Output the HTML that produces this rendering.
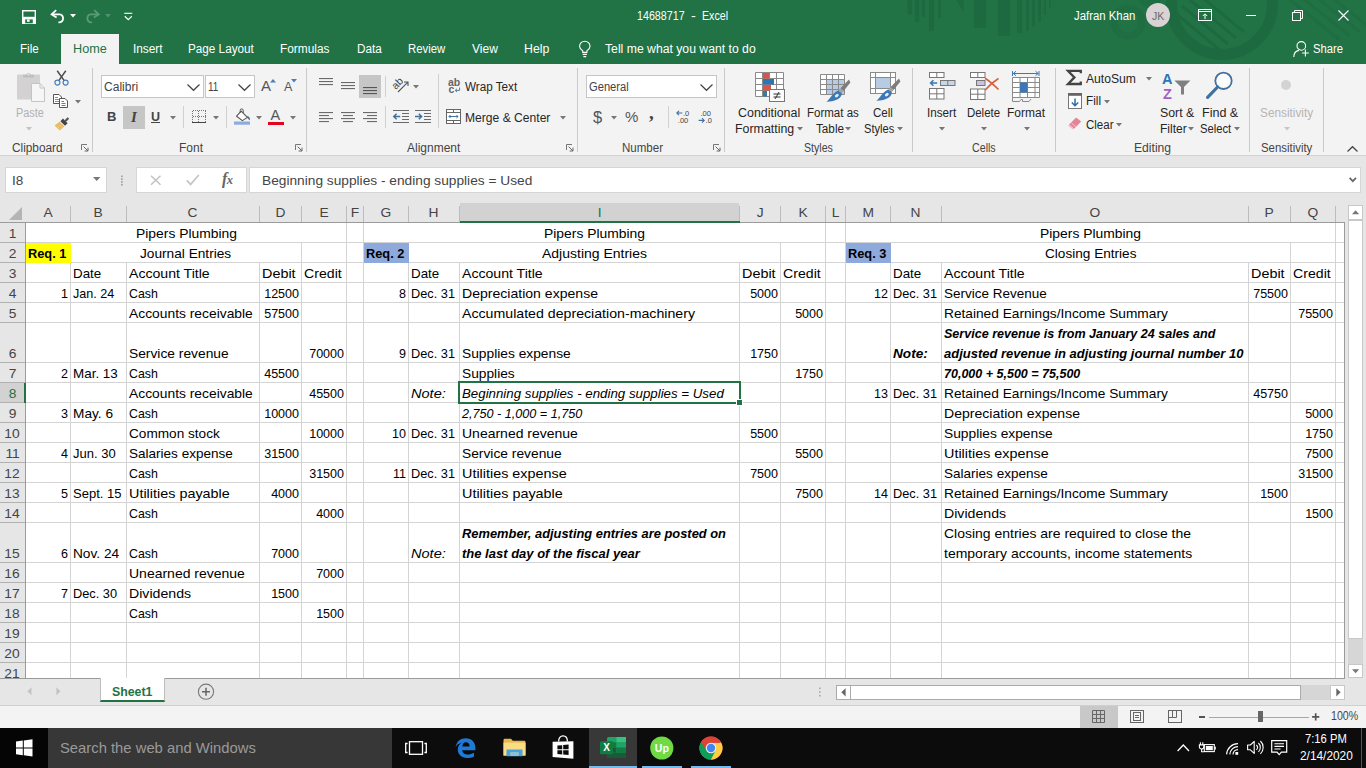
<!DOCTYPE html><html><head><meta charset="utf-8"><title>14688717 - Excel</title><style>
html,body{margin:0;padding:0;}
body{width:1366px;height:768px;overflow:hidden;position:relative;background:#fff;font-family:"Liberation Sans",sans-serif;font-size:12px;color:#262626;}
.a{position:absolute;white-space:nowrap;}
.t{position:absolute;white-space:nowrap;height:20px;line-height:20px;}
.ui{font-size:12px;color:#262626;}
.c,.n,.ci,.cbi,.cb{font-size:12.6px;color:#000;}
.ci{font-style:italic;}
.cbi{font-style:italic;font-weight:bold;}
.cb{font-weight:bold;}
.hd{font-size:12.6px;color:#444;text-align:center;}
.t>span{display:inline-block;}
.c>span,.hd>span{transform:scaleX(1.095);}
.n>span{transform:scaleX(0.995);}
.ci>span{transform:scaleX(1.05);}
.cbi>span{transform:scaleX(1.024);}
.cb>span{transform:scaleX(1.016);}
.vl{position:absolute;width:1px;background:#d4d4d4;}
.hl{position:absolute;height:1px;background:#d4d4d4;}
.sep{position:absolute;width:1px;background:#c6c6c6;}
svg{position:absolute;overflow:visible;}
</style></head><body><div class="a" style="left:0px;top:0px;width:1366px;height:64px;background:#217346;"></div><svg style="left:0;top:0" width="1366" height="64" viewBox="0 0 1366 64"><g fill="#1e6a40"><rect x="907.5" y="0" width="4.5" height="14.6"/><rect x="914.8" y="0" width="4.5" height="22"/><rect x="921.7" y="0" width="3.3" height="17"/><rect x="929" y="0" width="5" height="31"/><rect x="938" y="0" width="3" height="18"/><rect x="974" y="0" width="12" height="28"/><rect x="998" y="0" width="12" height="36"/><rect x="1017" y="0" width="5" height="33"/><rect x="1026" y="0" width="3" height="31"/><rect x="1032" y="0" width="3" height="27"/><rect x="1038" y="0" width="3" height="22"/><rect x="1044" y="0" width="2" height="15"/><rect x="1049" y="0" width="2" height="8"/><path d="M956 0H964V12Z"/></g>
<circle cx="1222" cy="4" r="50.500" fill="none" stroke="#1e6a40" stroke-width="11"/>
<g stroke="#1e6a40" stroke-width="3" fill="none"><path d="M1182 6L1228 44M1190 0L1236 38M1198 -6L1244 32M1174 12L1220 50"/></g>
<circle cx="1128" cy="22" r="14" fill="none" stroke="#1f6d42" stroke-width="7"/>
<circle cx="1150" cy="-4" r="12" fill="#1f6d42"/>
<g stroke="#1f6d42" stroke-width="3" fill="none"><path d="M1290 0L1340 40M1300 -4L1350 36M1310 -8L1360 32M1320 -12L1370 28"/></g>
</svg><svg style="left:22px;top:10px" width="14" height="14" viewBox="0 0 14 14"><path d="M0.7 0.7H13.3V13.3H0.7Z" fill="none" stroke="#fff" stroke-width="1.4"/><rect x="3" y="0.7" width="8" height="5.3" fill="none" stroke="#fff" stroke-width="0"/><path d="M0.7 6.8H13.3V13.3H0.7Z" fill="#fff"/><rect x="3.2" y="9.4" width="7.6" height="3.9" fill="#217346"/><rect x="5" y="9.4" width="2.6" height="2.4" fill="#fff"/></svg>
<svg style="left:50px;top:9px" width="16" height="15" viewBox="0 0 16 15"><path d="M6.2 1.2L1.6 5.4L6.6 8.6" fill="none" stroke="#fff" stroke-width="1.8" stroke-linejoin="miter"/><path d="M2.4 5.3H9.6A4.1 4.1 0 0 1 9.6 13.4H8.4" fill="none" stroke="#fff" stroke-width="1.8"/></svg>
<svg style="left:70px;top:14px" width="6" height="4" viewBox="0 0 6 4"><path d="M0 0H6L3 3.6Z" fill="#fff"/></svg>
<svg style="left:86px;top:9px" width="16" height="15" viewBox="0 0 16 15"><g transform="translate(14.4,0) scale(-1,1)"><path d="M6.2 1.2L1.6 5.4L6.6 8.6" fill="none" stroke="#5b9a78" stroke-width="1.8"/><path d="M2.4 5.3H9.6A4.1 4.1 0 0 1 9.6 13.4H8.4" fill="none" stroke="#5b9a78" stroke-width="1.8"/></g></svg>
<svg style="left:105px;top:14px" width="6" height="4" viewBox="0 0 6 4"><path d="M0 0H6L3 3.6Z" fill="#4f9170"/></svg>
<svg style="left:124px;top:12px" width="9" height="9" viewBox="0 0 9 9"><path d="M0.3 1.3H8.3" stroke="#fff" stroke-width="1.1"/><path d="M0.8 4.2L4.3 7.6L7.8 4.2" fill="none" stroke="#fff" stroke-width="1.2"/></svg>
<svg style="left:1198px;top:9px" width="14" height="12" viewBox="0 0 14 12"><rect x="0.5" y="0.5" width="13" height="11" fill="none" stroke="#fff"/><path d="M0.5 2.5H13.5" stroke="#fff"/><path d="M7 10V5M4.8 7L7 4.8L9.2 7" fill="none" stroke="#fff"/></svg>
<svg style="left:1246px;top:15px" width="10" height="1" viewBox="0 0 10 1"><rect width="10" height="1" fill="#fff"/></svg>
<svg style="left:1292px;top:10px" width="11" height="11" viewBox="0 0 11 11"><rect x="0.5" y="2.5" width="8" height="8" fill="none" stroke="#fff"/><path d="M2.5 2.5V0.5H10.5V8.5H8.5" fill="none" stroke="#fff"/></svg>
<svg style="left:1338px;top:10px" width="11" height="11" viewBox="0 0 11 11"><path d="M0.5 0.5L10.5 10.5M10.5 0.5L0.5 10.5" stroke="#fff" stroke-width="1.1"/></svg>
<svg style="left:637.4px;top:6px" width="47.6" height="20"><text x="0" y="14.2" textLength="47.6" lengthAdjust="spacingAndGlyphs" font-family="Liberation Sans, sans-serif" font-size="12" font-weight="normal" fill="#fff" >14688717</text></svg><svg style="left:691.1px;top:6px" width="4.8" height="20"><text x="0" y="14.2" textLength="4.8" lengthAdjust="spacingAndGlyphs" font-family="Liberation Sans, sans-serif" font-size="12" font-weight="normal" fill="#fff" >-</text></svg><svg style="left:702.1px;top:6px" width="26.0" height="20"><text x="0" y="14.2" textLength="26.0" lengthAdjust="spacingAndGlyphs" font-family="Liberation Sans, sans-serif" font-size="12" font-weight="normal" fill="#fff" >Excel</text></svg><svg style="left:1073.6px;top:6px" width="61.3" height="20"><text x="0" y="14.2" textLength="61.3" lengthAdjust="spacingAndGlyphs" font-family="Liberation Sans, sans-serif" font-size="12" font-weight="normal" fill="#fff" >Jafran Khan</text></svg><div class="a" style="left:1146px;top:3px;width:24px;height:24px;border-radius:12px;background:#d9d3d5;"></div><svg style="left:1152.1px;top:6px" width="12.3" height="20"><text x="0" y="14.2" textLength="12.3" lengthAdjust="spacingAndGlyphs" font-family="Liberation Sans, sans-serif" font-size="11" font-weight="normal" fill="#6a6a6a" >JK</text></svg><div class="a" style="left:61px;top:34px;width:58px;height:30px;background:#f3f3f3;"></div><svg style="left:19.6px;top:39px" width="18.8" height="20"><text x="0" y="14.2" textLength="18.8" lengthAdjust="spacingAndGlyphs" font-family="Liberation Sans, sans-serif" font-size="12" font-weight="normal" fill="#fff" >File</text></svg><svg style="left:72.8px;top:39px" width="33.8" height="20"><text x="0" y="14.2" textLength="33.8" lengthAdjust="spacingAndGlyphs" font-family="Liberation Sans, sans-serif" font-size="12" font-weight="normal" fill="#217346" >Home</text></svg><svg style="left:132.6px;top:39px" width="29.6" height="20"><text x="0" y="14.2" textLength="29.6" lengthAdjust="spacingAndGlyphs" font-family="Liberation Sans, sans-serif" font-size="12" font-weight="normal" fill="#fff" >Insert</text></svg><svg style="left:188.3px;top:39px" width="65.8" height="20"><text x="0" y="14.2" textLength="65.8" lengthAdjust="spacingAndGlyphs" font-family="Liberation Sans, sans-serif" font-size="12" font-weight="normal" fill="#fff" >Page Layout</text></svg><svg style="left:280.4px;top:39px" width="49.5" height="20"><text x="0" y="14.2" textLength="49.5" lengthAdjust="spacingAndGlyphs" font-family="Liberation Sans, sans-serif" font-size="12" font-weight="normal" fill="#fff" >Formulas</text></svg><svg style="left:356.6px;top:39px" width="24.8" height="20"><text x="0" y="14.2" textLength="24.8" lengthAdjust="spacingAndGlyphs" font-family="Liberation Sans, sans-serif" font-size="12" font-weight="normal" fill="#fff" >Data</text></svg><svg style="left:408.1px;top:39px" width="37.3" height="20"><text x="0" y="14.2" textLength="37.3" lengthAdjust="spacingAndGlyphs" font-family="Liberation Sans, sans-serif" font-size="12" font-weight="normal" fill="#fff" >Review</text></svg><svg style="left:471.6px;top:39px" width="25.8" height="20"><text x="0" y="14.2" textLength="25.8" lengthAdjust="spacingAndGlyphs" font-family="Liberation Sans, sans-serif" font-size="12" font-weight="normal" fill="#fff" >View</text></svg><svg style="left:523.6px;top:39px" width="25.3" height="20"><text x="0" y="14.2" textLength="25.3" lengthAdjust="spacingAndGlyphs" font-family="Liberation Sans, sans-serif" font-size="12" font-weight="normal" fill="#fff" >Help</text></svg><svg style="left:604.6px;top:39px" width="150.7" height="20"><text x="0" y="14.2" textLength="150.7" lengthAdjust="spacingAndGlyphs" font-family="Liberation Sans, sans-serif" font-size="12" font-weight="normal" fill="#fff" >Tell me what you want to do</text></svg><svg style="left:1312.7px;top:39px" width="30.0" height="20"><text x="0" y="14.2" textLength="30.0" lengthAdjust="spacingAndGlyphs" font-family="Liberation Sans, sans-serif" font-size="12" font-weight="normal" fill="#fff" >Share</text></svg><svg style="left:579px;top:41px" width="12" height="17" viewBox="0 0 12 17"><path d="M3.7 11.4V9.8C2.2 8.6 0.6 7.4 0.6 5.4A5.2 5.2 0 0 1 11 5.4C11 7.4 9.4 8.6 7.9 9.8V11.4Z" fill="none" stroke="#fff" stroke-width="1.1"/><path d="M3.7 13.4H7.9M4.4 15.6H7.2" stroke="#fff" stroke-width="1.1"/></svg>
<svg style="left:1293px;top:41px" width="17" height="17" viewBox="0 0 17 17"><circle cx="8.3" cy="4.9" r="4.3" fill="none" stroke="#fff" stroke-width="1.1"/><path d="M0.8 16C0.8 12.4 3 9.9 6 9.4" fill="none" stroke="#fff" stroke-width="1.1"/><path d="M12.4 8.6V15.4M9 12H15.8" stroke="#fff" stroke-width="1.1"/></svg>
<div class="a" style="left:0px;top:64px;width:1366px;height:91px;background:#f3f3f3;"></div><div class="a" style="left:0px;top:155px;width:1366px;height:1px;background:#d2d2d2;"></div><div class="sep" style="left:92px;top:68px;height:84px;background:#c9c9c9;"></div>
<div class="sep" style="left:306px;top:68px;height:84px;background:#c9c9c9;"></div>
<div class="sep" style="left:577px;top:68px;height:84px;background:#c9c9c9;"></div>
<div class="sep" style="left:724px;top:68px;height:84px;background:#c9c9c9;"></div>
<div class="sep" style="left:912px;top:68px;height:84px;background:#c9c9c9;"></div>
<div class="sep" style="left:1055px;top:68px;height:84px;background:#c9c9c9;"></div>
<div class="sep" style="left:1249px;top:68px;height:84px;background:#c9c9c9;"></div>
<div class="sep" style="left:1323px;top:68px;height:84px;background:#c9c9c9;"></div>
<svg style="left:12.2px;top:138px" width="50.6" height="20"><text x="0" y="14.2" textLength="50.6" lengthAdjust="spacingAndGlyphs" font-family="Liberation Sans, sans-serif" font-size="12" font-weight="normal" fill="#444" >Clipboard</text></svg>
<svg style="left:179.1px;top:138px" width="24.0" height="20"><text x="0" y="14.2" textLength="24.0" lengthAdjust="spacingAndGlyphs" font-family="Liberation Sans, sans-serif" font-size="12" font-weight="normal" fill="#444" >Font</text></svg>
<svg style="left:406.6px;top:138px" width="53.3" height="20"><text x="0" y="14.2" textLength="53.3" lengthAdjust="spacingAndGlyphs" font-family="Liberation Sans, sans-serif" font-size="12" font-weight="normal" fill="#444" >Alignment</text></svg>
<svg style="left:622.3px;top:138px" width="41.0" height="20"><text x="0" y="14.2" textLength="41.0" lengthAdjust="spacingAndGlyphs" font-family="Liberation Sans, sans-serif" font-size="12" font-weight="normal" fill="#444" >Number</text></svg>
<svg style="left:803.9px;top:138px" width="28.9" height="20"><text x="0" y="14.2" textLength="28.9" lengthAdjust="spacingAndGlyphs" font-family="Liberation Sans, sans-serif" font-size="12" font-weight="normal" fill="#444" >Styles</text></svg>
<svg style="left:972.3px;top:138px" width="23.7" height="20"><text x="0" y="14.2" textLength="23.7" lengthAdjust="spacingAndGlyphs" font-family="Liberation Sans, sans-serif" font-size="12" font-weight="normal" fill="#444" >Cells</text></svg>
<svg style="left:1134.1px;top:138px" width="37.1" height="20"><text x="0" y="14.2" textLength="37.1" lengthAdjust="spacingAndGlyphs" font-family="Liberation Sans, sans-serif" font-size="12" font-weight="normal" fill="#444" >Editing</text></svg>
<svg style="left:1261.1px;top:138px" width="51.3" height="20"><text x="0" y="14.2" textLength="51.3" lengthAdjust="spacingAndGlyphs" font-family="Liberation Sans, sans-serif" font-size="12" font-weight="normal" fill="#444" >Sensitivity</text></svg>
<svg style="left:81px;top:144px" width="8" height="8" viewBox="0 0 8 8"><path d="M0.5 6V0.5H6" fill="none" stroke="#777" stroke-width="1"/><path d="M2.6 2.6L7 7M7 3.6V7H3.6" fill="none" stroke="#666" stroke-width="1"/></svg>
<svg style="left:295px;top:144px" width="8" height="8" viewBox="0 0 8 8"><path d="M0.5 6V0.5H6" fill="none" stroke="#777" stroke-width="1"/><path d="M2.6 2.6L7 7M7 3.6V7H3.6" fill="none" stroke="#666" stroke-width="1"/></svg>
<svg style="left:566px;top:144px" width="8" height="8" viewBox="0 0 8 8"><path d="M0.5 6V0.5H6" fill="none" stroke="#777" stroke-width="1"/><path d="M2.6 2.6L7 7M7 3.6V7H3.6" fill="none" stroke="#666" stroke-width="1"/></svg>
<svg style="left:713px;top:144px" width="8" height="8" viewBox="0 0 8 8"><path d="M0.5 6V0.5H6" fill="none" stroke="#777" stroke-width="1"/><path d="M2.6 2.6L7 7M7 3.6V7H3.6" fill="none" stroke="#666" stroke-width="1"/></svg>
<svg style="left:1347px;top:146px" width="11" height="6" viewBox="0 0 11 6"><path d="M0.5 5.5L5.5 0.7L10.5 5.5" fill="none" stroke="#444" stroke-width="1.2"/></svg>
<svg style="left:17px;top:72px" width="28" height="30" viewBox="0 0 28 30"><rect x="0" y="2.5" width="23" height="25" rx="1" fill="#d3d1d2"/><path d="M6 5.5V2.8H9.2A2.4 2.4 0 0 1 13.8 2.8H17V5.5Z" fill="#bfbdbe"/><circle cx="11.5" cy="2.6" r="1" fill="#e9e9e9"/>
<path d="M14.5 11.5H23L27.5 16V29.5H14.5Z" fill="#f6f6f6" stroke="#c4c4c4" stroke-width="1"/><path d="M23 11.5V16H27.5" fill="none" stroke="#c4c4c4"/></svg>
<svg style="left:15.6px;top:103px" width="27.8" height="20"><text x="0" y="14.2" textLength="27.8" lengthAdjust="spacingAndGlyphs" font-family="Liberation Sans, sans-serif" font-size="12" font-weight="normal" fill="#b1b1b1" >Paste</text></svg>
<svg style="left:25.5px;top:126.5px" width="6" height="4" viewBox="0 0 6 4"><path d="M0 0H6L3 3.4Z" fill="#c3c3c3"/></svg>
<svg style="left:54px;top:70px" width="15" height="16" viewBox="0 0 15 16"><path d="M3.2 0.8L10.2 10.6M11.8 0.8L4.8 10.6" stroke="#4d4d4d" stroke-width="1.5" fill="none"/><circle cx="3.4" cy="12.6" r="2.5" fill="none" stroke="#4a7ebb" stroke-width="1.2"/><circle cx="11.6" cy="12.6" r="2.5" fill="none" stroke="#4a7ebb" stroke-width="1.2"/></svg>
<svg style="left:53px;top:94px" width="16" height="15" viewBox="0 0 16 15"><path d="M0.5 0.5H6L8.5 3V9.5H0.5Z" fill="#fff" stroke="#555" stroke-width="1"/><path d="M2 3.5H5M2 5.5H6M2 7.5H6" stroke="#8a8a8a" stroke-width="1"/>
<path d="M6.5 4.5H12L14.5 7V13.5H6.5Z" fill="#fff" stroke="#555" stroke-width="1"/><path d="M8.500 7.500H11M8.500 9.500H12.500M8.500 11.500H12.500" stroke="#4a7ebb" stroke-width="1"/></svg>
<svg style="left:74.5px;top:99.5px" width="6" height="4" viewBox="0 0 6 4"><path d="M0 0H6L3 3.4Z" fill="#777"/></svg>
<svg style="left:54px;top:116px" width="16" height="16" viewBox="0 0 16 16"><path d="M10.6 4.2L13.6 1.2L15.2 2.8L12.2 5.8Z" fill="#555"/><path d="M6.4 5.2L9 2.6L13.6 7.2L11 9.8Z" fill="#444"/><path d="M0.6 9.4L5.6 5.8L10.4 10.6L5.6 14.6Z" fill="#e8b85c"/><path d="M3 9.8L6.5 13.3M5 8.2L8.4 11.6" stroke="#f4d89a" stroke-width="0.8"/></svg>
<div class="a" style="left:101px;top:75px;width:103px;height:23px;box-sizing:border-box;border:1px solid #c6c6c6;background:#fff;"></div>
<div class="a" style="left:205px;top:75px;width:50px;height:23px;box-sizing:border-box;border:1px solid #c6c6c6;background:#fff;"></div>
<svg style="left:104.1px;top:77px" width="34.1" height="20"><text x="0" y="14.2" textLength="34.1" lengthAdjust="spacingAndGlyphs" font-family="Liberation Sans, sans-serif" font-size="12" font-weight="normal" fill="#444" >Calibri</text></svg>
<svg style="left:207.9px;top:77px" width="10.3" height="20"><text x="0" y="14.2" textLength="10.3" lengthAdjust="spacingAndGlyphs" font-family="Liberation Sans, sans-serif" font-size="12" font-weight="normal" fill="#444" >11</text></svg>
<svg style="left:187px;top:83.5px" width="13" height="7" viewBox="0 0 13 7"><path d="M0.5 0.5L6.5 6.3L12.5 0.5" fill="none" stroke="#444" stroke-width="1.2"/></svg>
<svg style="left:237.5px;top:83.5px" width="13" height="7" viewBox="0 0 13 7"><path d="M0.5 0.5L6.5 6.3L12.5 0.5" fill="none" stroke="#444" stroke-width="1.2"/></svg>
<div class="t ui" style="left:261px;top:76px;color:#555;font-size:15px;">A</div>
<svg style="left:270px;top:79px" width="6" height="4" viewBox="0 0 6 4"><path d="M0 3.6H6L3 0Z" fill="#4a7ebb"/></svg>
<div class="t ui" style="left:284px;top:77px;color:#555;font-size:12.5px;">A</div>
<svg style="left:291px;top:79px" width="6" height="4" viewBox="0 0 6 4"><path d="M0 0H6L3 3.6Z" fill="#4a7ebb"/></svg>
<div class="t ui" style="left:107px;top:107px;color:#444;font-size:13px;font-weight:bold;">B</div>
<div class="a" style="left:123px;top:106px;width:22px;height:23px;background:#c6c6c6;"></div>
<div class="t" style="left:123px;width:22px;text-align:center;top:107px;font-family:'Liberation Serif',serif;font-style:italic;font-weight:bold;font-size:15px;color:#444;">I</div>
<div class="t ui" style="left:151px;top:106.5px;color:#444;font-size:12.5px;font-weight:bold;">U</div>
<div class="a" style="left:151px;top:122px;width:9px;height:1px;background:#444;"></div>
<svg style="left:169.5px;top:115.5px" width="6" height="4" viewBox="0 0 6 4"><path d="M0 0H6L3 3.4Z" fill="#777"/></svg>
<div class="sep" style="left:183px;top:106px;height:22px;background:#d0d0d0;"></div>
<svg style="left:192px;top:110px" width="14" height="14" viewBox="0 0 14 14"><path d="M0.5 0.5H13.5M0.5 6.5H13.5M0.5 0.5V12M6.5 0.5V12M13.5 0.5V12" stroke="#777" stroke-width="1" stroke-dasharray="1 1" fill="none" shape-rendering="crispEdges"/><path d="M0 12.5H14" stroke="#444" stroke-width="1"/></svg>
<svg style="left:212.5px;top:115.5px" width="6" height="4" viewBox="0 0 6 4"><path d="M0 0H6L3 3.4Z" fill="#777"/></svg>
<div class="sep" style="left:226px;top:106px;height:22px;background:#d0d0d0;"></div>
<svg style="left:234px;top:108px" width="18" height="17" viewBox="0 0 18 17"><path d="M7.2 3.2L13.4 9.4L8.4 12.6L2.6 8.2Z" fill="#fdfdfd" stroke="#555" stroke-width="1.1" stroke-linejoin="round"/><path d="M6.2 4.8V2.4A1.5 1.5 0 0 1 9.2 2.4V5" fill="none" stroke="#555" stroke-width="1"/><path d="M13.4 8C15.2 8.6 16.2 10 16 12.2C14.6 11.4 13.6 10.4 13 9.2Z" fill="#41719c"/><rect x="0" y="13.5" width="16" height="3.2" fill="#8faadc"/></svg>
<svg style="left:255.5px;top:115.5px" width="6" height="4" viewBox="0 0 6 4"><path d="M0 0H6L3 3.4Z" fill="#777"/></svg>
<div class="t ui" style="left:270.5px;top:105px;color:#555;font-size:14.5px;">A</div>
<div class="a" style="left:268px;top:121.5px;width:16px;height:3.2px;background:#e3061b;"></div>
<svg style="left:289.5px;top:115.5px" width="6" height="4" viewBox="0 0 6 4"><path d="M0 0H6L3 3.4Z" fill="#777"/></svg>
<svg style="left:319px;top:0px" width="16" height="1"><rect x="0" y="78.0" width="14" height="1.1" fill="#6a6a6a"/><rect x="0" y="81.0" width="14" height="1.1" fill="#6a6a6a"/><rect x="0" y="84.0" width="14" height="1.1" fill="#6a6a6a"/></svg>
<svg style="left:341px;top:0px" width="16" height="1"><rect x="0" y="82.0" width="14" height="1.1" fill="#6a6a6a"/><rect x="0" y="85.0" width="14" height="1.1" fill="#6a6a6a"/><rect x="0" y="88.0" width="14" height="1.1" fill="#6a6a6a"/></svg>
<div class="a" style="left:359px;top:75px;width:22px;height:23px;background:#c6c6c6;"></div>
<svg style="left:363px;top:0px" width="16" height="1"><rect x="0" y="87.0" width="14" height="1.1" fill="#555"/><rect x="0" y="90.0" width="14" height="1.1" fill="#555"/><rect x="0" y="93.0" width="14" height="1.1" fill="#555"/></svg>
<div class="sep" style="left:385px;top:76px;height:21px;background:#d0d0d0;"></div>
<svg style="left:392px;top:77px" width="18" height="17" viewBox="0 0 18 17"><g transform="rotate(-45 8 8)"><text x="1.5" y="8.4" font-family="Liberation Sans, sans-serif" font-size="10.5" fill="#444">ab</text></g><path d="M6 15L15.6 5.4M12 5H16V9" fill="none" stroke="#555" stroke-width="1.1"/></svg>
<svg style="left:412.5px;top:85.0px" width="6" height="4" viewBox="0 0 6 4"><path d="M0 0H6L3 3.4Z" fill="#777"/></svg>
<svg style="left:319px;top:0px" width="16" height="1"><rect x="0" y="112.0" width="14" height="1.1" fill="#6a6a6a"/><rect x="0" y="115.0" width="10" height="1.1" fill="#6a6a6a"/><rect x="0" y="118.0" width="14" height="1.1" fill="#6a6a6a"/><rect x="0" y="121.0" width="10" height="1.1" fill="#6a6a6a"/></svg>
<svg style="left:341px;top:0px" width="16" height="1"><rect x="0" y="112.0" width="14" height="1.1" fill="#6a6a6a"/><rect x="2" y="115.0" width="10" height="1.1" fill="#6a6a6a"/><rect x="0" y="118.0" width="14" height="1.1" fill="#6a6a6a"/><rect x="2" y="121.0" width="10" height="1.1" fill="#6a6a6a"/></svg>
<svg style="left:363px;top:0px" width="16" height="1"><rect x="0" y="112.0" width="14" height="1.1" fill="#6a6a6a"/><rect x="4" y="115.0" width="10" height="1.1" fill="#6a6a6a"/><rect x="0" y="118.0" width="14" height="1.1" fill="#6a6a6a"/><rect x="4" y="121.0" width="10" height="1.1" fill="#6a6a6a"/></svg>
<div class="sep" style="left:385px;top:106px;height:22px;background:#d0d0d0;"></div>
<svg style="left:393px;top:110px" width="16" height="13" viewBox="0 0 16 13"><path d="M0 0.5H16M9 3.5H16M9 6.5H16M9 9.5H16M0 12.5H16" stroke="#6a6a6a" stroke-width="1.1"/><path d="M7.2 6.5H1M3.6 3.8L0.8 6.5L3.6 9.2" fill="none" stroke="#41719c" stroke-width="1.5"/></svg>
<svg style="left:415px;top:110px" width="16" height="13" viewBox="0 0 16 13"><path d="M0 0.5H16M9 3.5H16M9 6.5H16M9 9.5H16M0 12.5H16" stroke="#6a6a6a" stroke-width="1.1"/><path d="M0 6.5H6.4M3.8 3.8L6.6 6.5L3.8 9.2" fill="none" stroke="#41719c" stroke-width="1.5"/></svg>
<div class="sep" style="left:438px;top:74px;height:54px;background:#d0d0d0;"></div>
<svg style="left:448px;top:79px" width="13" height="15" viewBox="0 0 13 15"><text x="0" y="6.6" font-family="Liberation Sans, sans-serif" font-size="10.5" font-weight="bold" fill="#666">ab</text><text x="0.6" y="13.6" font-family="Liberation Sans, sans-serif" font-size="10.5" font-weight="bold" fill="#666">c</text><path d="M11.6 8.5V11.4H7.4M9 9.8L7.2 11.4L9 13" fill="none" stroke="#41719c" stroke-width="0.9"/></svg>
<svg style="left:465.0px;top:77px" width="52.2" height="20"><text x="0" y="14.2" textLength="52.2" lengthAdjust="spacingAndGlyphs" font-family="Liberation Sans, sans-serif" font-size="12" font-weight="normal" fill="#262626" >Wrap Text</text></svg>
<svg style="left:446px;top:109px" width="15" height="15" viewBox="0 0 15 15"><rect x="0.5" y="0.5" width="14" height="14" fill="#fff" stroke="#666"/><path d="M0.5 3.5H14.5M0.5 11.5H14.5M7.5 0.5V3.5M7.5 11.5V14.5" stroke="#666" stroke-width="1"/><path d="M3 7.5H12M4.6 5.9L3 7.5L4.6 9.1M10.4 5.9L12 7.5L10.4 9.1" fill="none" stroke="#41719c" stroke-width="1"/></svg>
<svg style="left:465.0px;top:108px" width="85.4" height="20"><text x="0" y="14.2" textLength="85.4" lengthAdjust="spacingAndGlyphs" font-family="Liberation Sans, sans-serif" font-size="12" font-weight="normal" fill="#262626" >Merge &amp; Center</text></svg>
<svg style="left:559.5px;top:115.5px" width="6" height="4" viewBox="0 0 6 4"><path d="M0 0H6L3 3.4Z" fill="#777"/></svg>
<div class="a" style="left:586px;top:75px;width:131px;height:23px;box-sizing:border-box;border:1px solid #c6c6c6;background:#fff;"></div>
<svg style="left:589.3px;top:77px" width="39.7" height="20"><text x="0" y="14.2" textLength="39.7" lengthAdjust="spacingAndGlyphs" font-family="Liberation Sans, sans-serif" font-size="12" font-weight="normal" fill="#444" >General</text></svg>
<svg style="left:700px;top:83.5px" width="13" height="7" viewBox="0 0 13 7"><path d="M0.5 0.5L6.5 6.3L12.5 0.5" fill="none" stroke="#444" stroke-width="1.2"/></svg>
<div class="t ui" style="left:593px;top:107px;color:#555;font-size:16.5px;">$</div>
<svg style="left:610.5px;top:115.5px" width="6" height="4" viewBox="0 0 6 4"><path d="M0 0H6L3 3.4Z" fill="#777"/></svg>
<div class="t ui" style="left:625px;top:107px;color:#555;font-size:15px;">%</div>
<div class="t ui" style="left:649px;top:103px;color:#444;font-size:19px;font-weight:bold;font-family:'Liberation Serif',serif;">,</div>
<div class="sep" style="left:668px;top:106px;height:22px;background:#d0d0d0;"></div>
<svg style="left:676px;top:110px" width="15" height="14" viewBox="0 0 15 14"><path d="M6.4 3H0.8M3 0.8L0.8 3L3 5.2" fill="none" stroke="#41719c" stroke-width="1.1"/><text x="7" y="6" font-family="Liberation Sans, sans-serif" font-size="7.5" fill="#444">.0</text><text x="1.8" y="13.2" font-family="Liberation Sans, sans-serif" font-size="7.5" fill="#444">.00</text></svg>
<svg style="left:698px;top:110px" width="15" height="14" viewBox="0 0 15 14"><text x="2.4" y="6" font-family="Liberation Sans, sans-serif" font-size="7.5" fill="#444">.00</text><path d="M0.6 10.4H6.2M4 8.2L6.2 10.4L4 12.6" fill="none" stroke="#41719c" stroke-width="1.1"/><text x="7.6" y="13.2" font-family="Liberation Sans, sans-serif" font-size="7.5" fill="#444">.0</text></svg>
<svg style="left:755px;top:72px" width="31" height="31" viewBox="0 0 31 31"><rect x="0.5" y="0.5" width="28" height="24" fill="#fff"/><path d="M0.5 0.5H28.5" stroke="#8a8a8a" stroke-width="1"/><path d="M0.5 6.5H28.5" stroke="#8a8a8a" stroke-width="1"/><path d="M0.5 12.5H28.5" stroke="#8a8a8a" stroke-width="1"/><path d="M0.5 18.5H28.5" stroke="#8a8a8a" stroke-width="1"/><path d="M0.5 24.5H28.5" stroke="#8a8a8a" stroke-width="1"/><path d="M0.5 0.5V24.5" stroke="#8a8a8a" stroke-width="1"/><path d="M7.5 0.5V24.5" stroke="#8a8a8a" stroke-width="1"/><path d="M14.5 0.5V24.5" stroke="#8a8a8a" stroke-width="1"/><path d="M21.5 0.5V24.5" stroke="#8a8a8a" stroke-width="1"/><path d="M28.5 0.5V24.5" stroke="#8a8a8a" stroke-width="1"/><rect x="8" y="1" width="6" height="5.5" fill="#d9534a"/><rect x="8" y="7" width="11" height="5.5" fill="#2e75b6"/><rect x="8" y="13" width="8" height="5.5" fill="#d9534a"/><rect x="8" y="19" width="4" height="5.5" fill="#3c7a9c"/>
<rect x="14.5" y="17.5" width="15" height="12" fill="#fbfbfb" stroke="#777"/><path d="M18.5 22H25.5M18.5 25H25.5M24 20L20 27" stroke="#333" stroke-width="1"/></svg>
<svg style="left:738.2px;top:103px" width="62.2" height="20"><text x="0" y="14.2" textLength="62.2" lengthAdjust="spacingAndGlyphs" font-family="Liberation Sans, sans-serif" font-size="12" font-weight="normal" fill="#262626" >Conditional</text></svg>
<svg style="left:735.0px;top:119px" width="59.2" height="20"><text x="0" y="14.2" textLength="59.2" lengthAdjust="spacingAndGlyphs" font-family="Liberation Sans, sans-serif" font-size="12" font-weight="normal" fill="#262626" >Formatting</text></svg>
<svg style="left:796.7px;top:127.0px" width="6" height="4" viewBox="0 0 6 4"><path d="M0 0H6L3 3.4Z" fill="#777"/></svg>
<svg style="left:820px;top:74px" width="32" height="30" viewBox="0 0 32 30"><rect x="0.5" y="0.5" width="24" height="20" fill="#fff"/><rect x="6.5" y="5.5" width="18" height="15" fill="#b7cbe3"/><path d="M0.5 0.5H24.5" stroke="#8a8a8a"/><path d="M0.5 5.5H24.5" stroke="#8a8a8a"/><path d="M0.5 10.5H24.5" stroke="#8a8a8a"/><path d="M0.5 15.5H24.5" stroke="#8a8a8a"/><path d="M0.5 20.5H24.5" stroke="#8a8a8a"/><path d="M0.5 0.5V20.5" stroke="#8a8a8a"/><path d="M6.5 0.5V20.5" stroke="#8a8a8a"/><path d="M12.5 0.5V20.5" stroke="#8a8a8a"/><path d="M18.5 0.5V20.5" stroke="#8a8a8a"/><path d="M24.5 0.5V20.5" stroke="#8a8a8a"/><g transform="translate(0,0)"><path d="M29 5.400L30.400 8.600L23.600 17L20.400 14.200Z" fill="#7d7d7d"/><path d="M20.400 14.200L23.600 17L21.800 19.200L18.200 16.400Z" fill="#a5a5a5"/><path d="M18.200 16.400L21.800 19.200C22 23.500 17 27.400 6.200 27.700C10.500 25 11.500 19.500 18.200 16.400Z" fill="#3b78b4"/><ellipse cx="16.800" cy="21.600" rx="2.200" ry="1.400" fill="#e3edf7" transform="rotate(-40 16.800 21.600)"/></g></svg>
<svg style="left:807.4px;top:103px" width="51.8" height="20"><text x="0" y="14.2" textLength="51.8" lengthAdjust="spacingAndGlyphs" font-family="Liberation Sans, sans-serif" font-size="12" font-weight="normal" fill="#262626" >Format as</text></svg>
<svg style="left:815.6px;top:119px" width="28.0" height="20"><text x="0" y="14.2" textLength="28.0" lengthAdjust="spacingAndGlyphs" font-family="Liberation Sans, sans-serif" font-size="12" font-weight="normal" fill="#262626" >Table</text></svg>
<svg style="left:845.4px;top:127.0px" width="6" height="4" viewBox="0 0 6 4"><path d="M0 0H6L3 3.4Z" fill="#777"/></svg>
<svg style="left:870px;top:72px" width="32" height="30" viewBox="0 0 32 30"><rect x="0.5" y="0.5" width="25" height="21" fill="#fff" stroke="#8a8a8a"/><path d="M0.5 5.5H25.5M0.5 16.500H25.5M5.5 0.5V21.5M20.5 0.5V21.5" stroke="#8a8a8a"/><rect x="6" y="6" width="14" height="10" fill="#b7cbe3"/><g transform="translate(0,1)"><path d="M29 5.400L30.400 8.600L23.600 17L20.400 14.200Z" fill="#7d7d7d"/><path d="M20.400 14.200L23.600 17L21.800 19.200L18.200 16.400Z" fill="#a5a5a5"/><path d="M18.200 16.400L21.800 19.200C22 23.500 17 27.400 6.200 27.700C10.500 25 11.500 19.500 18.200 16.400Z" fill="#3b78b4"/><ellipse cx="16.800" cy="21.600" rx="2.200" ry="1.400" fill="#e3edf7" transform="rotate(-40 16.800 21.600)"/></g></svg>
<svg style="left:873.1px;top:103px" width="19.9" height="20"><text x="0" y="14.2" textLength="19.9" lengthAdjust="spacingAndGlyphs" font-family="Liberation Sans, sans-serif" font-size="12" font-weight="normal" fill="#262626" >Cell</text></svg>
<svg style="left:864.1px;top:119px" width="30.3" height="20"><text x="0" y="14.2" textLength="30.3" lengthAdjust="spacingAndGlyphs" font-family="Liberation Sans, sans-serif" font-size="12" font-weight="normal" fill="#262626" >Styles</text></svg>
<svg style="left:896.5px;top:127.0px" width="6" height="4" viewBox="0 0 6 4"><path d="M0 0H6L3 3.4Z" fill="#777"/></svg>
<svg style="left:929px;top:72px" width="27" height="28" viewBox="0 0 27 28"><rect x="0.5" y="0.5" width="14.500" height="5" fill="#fff" stroke="#777"/><path d="M7.8 0.5V5.5" stroke="#777"/>
<rect x="11.5" y="8.5" width="14.500" height="5" fill="#c9d6e8" stroke="#777"/><path d="M18.8 8.5V13.5" stroke="#777"/>
<path d="M8.2 11H1.6M4.4 8.200L1.600 11L4.4 13.800" fill="none" stroke="#3b78b4" stroke-width="1.600"/>
<rect x="0.5" y="16.500" width="14.500" height="10.500" fill="#fff" stroke="#777"/><path d="M7.8 16.500V27M0.5 21.800H15" stroke="#777"/></svg>
<svg style="left:927.0px;top:103px" width="29.2" height="20"><text x="0" y="14.2" textLength="29.2" lengthAdjust="spacingAndGlyphs" font-family="Liberation Sans, sans-serif" font-size="12" font-weight="normal" fill="#262626" >Insert</text></svg>
<svg style="left:938.5px;top:126.5px" width="6" height="4" viewBox="0 0 6 4"><path d="M0 0H6L3 3.4Z" fill="#777"/></svg>
<svg style="left:970px;top:72px" width="30" height="28" viewBox="0 0 30 28"><rect x="0.5" y="0.5" width="14.500" height="5" fill="#fff" stroke="#777"/><path d="M7.8 0.5V5.5" stroke="#777"/>
<rect x="6.5" y="8.5" width="8.5" height="5" fill="#c9c4dc" stroke="#777"/>
<rect x="0.5" y="17" width="14.500" height="10.500" fill="#fff" stroke="#777"/><path d="M7.8 17V27.500M0.5 22.200H15" stroke="#777"/>
<path d="M15 6.200C19 8.600 23.500 12.500 28.500 17.500M28.500 6.500C23.500 9.500 19 13.500 15.200 18" fill="none" stroke="#d9603f" stroke-width="1.700"/></svg>
<svg style="left:967.3px;top:103px" width="33.0" height="20"><text x="0" y="14.2" textLength="33.0" lengthAdjust="spacingAndGlyphs" font-family="Liberation Sans, sans-serif" font-size="12" font-weight="normal" fill="#262626" >Delete</text></svg>
<svg style="left:980.5px;top:126.5px" width="6" height="4" viewBox="0 0 6 4"><path d="M0 0H6L3 3.4Z" fill="#777"/></svg>
<svg style="left:1012px;top:72px" width="28" height="30" viewBox="0 0 28 30"><path d="M1 1.500H26.500M0.5 -1V4M27 -1V4M4 -0.8L1.400 1.500L4 3.800M23.500 -0.8L26.100 1.500L23.500 3.800" fill="none" stroke="#3b78b4" stroke-width="1"/><rect x="0.5" y="5.5" width="27" height="20" fill="#fff"/><path d="M0.5 5.5H27.5" stroke="#8a8a8a"/><path d="M0.5 10.5H27.5" stroke="#8a8a8a"/><path d="M0.5 15.5H27.5" stroke="#8a8a8a"/><path d="M0.5 20.5H27.5" stroke="#8a8a8a"/><path d="M0.5 25.5H27.5" stroke="#8a8a8a"/><path d="M0.5 5.5V25.5" stroke="#8a8a8a"/><path d="M8.0 5.5V25.5" stroke="#8a8a8a"/><path d="M15.5 5.5V25.5" stroke="#8a8a8a"/><path d="M23.0 5.5V25.5" stroke="#8a8a8a"/><path d="M27.5 5.5V25.5" stroke="#8a8a8a"/><rect x="8" y="10.500" width="7.5" height="10" fill="#3b78b4"/><path d="M0.5 25.500V29.500H7.500L9 27.500H10.500V29.500H17L19 27" fill="none" stroke="#8a8a8a"/></svg>
<svg style="left:1007.2px;top:103px" width="38.0" height="20"><text x="0" y="14.2" textLength="38.0" lengthAdjust="spacingAndGlyphs" font-family="Liberation Sans, sans-serif" font-size="12" font-weight="normal" fill="#262626" >Format</text></svg>
<svg style="left:1023.5px;top:126.5px" width="6" height="4" viewBox="0 0 6 4"><path d="M0 0H6L3 3.4Z" fill="#777"/></svg>
<svg style="left:1067px;top:70px" width="15" height="15" viewBox="0 0 15 15"><path d="M13.800 3.200V0.800H1L7.400 7.400L1 14H13.800V11.600" fill="none" stroke="#444" stroke-width="2.300" stroke-linejoin="miter"/></svg>
<svg style="left:1085.9px;top:69px" width="49.9" height="20"><text x="0" y="14.2" textLength="49.9" lengthAdjust="spacingAndGlyphs" font-family="Liberation Sans, sans-serif" font-size="12" font-weight="normal" fill="#262626" >AutoSum</text></svg>
<svg style="left:1145.5px;top:76.5px" width="6" height="4" viewBox="0 0 6 4"><path d="M0 0H6L3 3.4Z" fill="#777"/></svg>
<svg style="left:1068px;top:93px" width="14" height="16" viewBox="0 0 14 16"><rect x="0.5" y="0.5" width="13" height="15" fill="#fff" stroke="#777"/><rect x="0" y="0" width="14" height="2.800" fill="#666"/><path d="M7 5.500V12.500M3.800 9.500L7 12.700L10.200 9.500" fill="none" stroke="#2e6da4" stroke-width="1.500"/></svg>
<svg style="left:1085.9px;top:91px" width="15.0" height="20"><text x="0" y="14.2" textLength="15.0" lengthAdjust="spacingAndGlyphs" font-family="Liberation Sans, sans-serif" font-size="12" font-weight="normal" fill="#262626" >Fill</text></svg>
<svg style="left:1103.7px;top:99.5px" width="6" height="4" viewBox="0 0 6 4"><path d="M0 0H6L3 3.4Z" fill="#777"/></svg>
<svg style="left:1068px;top:117px" width="14" height="13" viewBox="0 0 14 13"><path d="M8.200 0.600L13.200 4.600L6.200 11.800L1 7.600Z" fill="#e48597"/><path d="M3.200 5.800L8.200 10" stroke="#f8d0d6" stroke-width="0.8"/><path d="M1 7.600L6.200 11.800L5 12.600L0.400 9Z" fill="#f2b9c2"/></svg>
<svg style="left:1085.9px;top:115px" width="27.5" height="20"><text x="0" y="14.2" textLength="27.5" lengthAdjust="spacingAndGlyphs" font-family="Liberation Sans, sans-serif" font-size="12" font-weight="normal" fill="#262626" >Clear</text></svg>
<svg style="left:1115.5px;top:123.0px" width="6" height="4" viewBox="0 0 6 4"><path d="M0 0H6L3 3.4Z" fill="#777"/></svg>
<div class="t" style="left:1162px;top:69px;font-size:14.500px;font-weight:bold;color:#2e75b6;">A</div>
<div class="t" style="left:1163px;top:83.500px;font-size:14.500px;font-weight:bold;color:#a55fc2;">Z</div>
<svg style="left:1174px;top:80px" width="17" height="15" viewBox="0 0 17 15"><path d="M0.4 0.4H16.400L10 7V14.400H7V7Z" fill="#808080"/></svg>
<svg style="left:1159.6px;top:103px" width="34.3" height="20"><text x="0" y="14.2" textLength="34.3" lengthAdjust="spacingAndGlyphs" font-family="Liberation Sans, sans-serif" font-size="12" font-weight="normal" fill="#262626" >Sort &amp;</text></svg>
<svg style="left:1159.6px;top:119px" width="26.7" height="20"><text x="0" y="14.2" textLength="26.7" lengthAdjust="spacingAndGlyphs" font-family="Liberation Sans, sans-serif" font-size="12" font-weight="normal" fill="#262626" >Filter</text></svg>
<svg style="left:1188.3px;top:127.0px" width="6" height="4" viewBox="0 0 6 4"><path d="M0 0H6L3 3.4Z" fill="#777"/></svg>
<svg style="left:1205px;top:70px" width="30" height="30" viewBox="0 0 30 30"><circle cx="18.500" cy="10.800" r="8.200" fill="#fcfcfc" stroke="#41719c" stroke-width="1.800"/><path d="M12.600 17L2.600 27.400" stroke="#41719c" stroke-width="3.200" stroke-linecap="round"/></svg>
<svg style="left:1201.9px;top:103px" width="36.2" height="20"><text x="0" y="14.2" textLength="36.2" lengthAdjust="spacingAndGlyphs" font-family="Liberation Sans, sans-serif" font-size="12" font-weight="normal" fill="#262626" >Find &amp;</text></svg>
<svg style="left:1200.0px;top:119px" width="31.2" height="20"><text x="0" y="14.2" textLength="31.2" lengthAdjust="spacingAndGlyphs" font-family="Liberation Sans, sans-serif" font-size="12" font-weight="normal" fill="#262626" >Select</text></svg>
<svg style="left:1233.5px;top:127.0px" width="6" height="4" viewBox="0 0 6 4"><path d="M0 0H6L3 3.4Z" fill="#777"/></svg>
<div class="a" style="left:1281px;top:80px;width:10px;height:10px;border-radius:5px;background:#d3d3d3;"></div>
<svg style="left:1260.1px;top:103px" width="53.2" height="20"><text x="0" y="14.2" textLength="53.2" lengthAdjust="spacingAndGlyphs" font-family="Liberation Sans, sans-serif" font-size="12" font-weight="normal" fill="#b5b5b5" >Sensitivity</text></svg>
<svg style="left:1283.5px;top:126.5px" width="6" height="4" viewBox="0 0 6 4"><path d="M0 0H6L3 3.4Z" fill="#c6c6c6"/></svg><div class="a" style="left:0px;top:156px;width:1366px;height:47px;background:#e6e6e6;"></div><div class="a" style="left:5px;top:167px;width:102px;height:26px;background:#fff;box-sizing:border-box;border:1px solid #d6d6d6;"></div><svg style="left:12.1px;top:171px" width="11.3" height="20"><text x="0" y="14.2" textLength="11.3" lengthAdjust="spacingAndGlyphs" font-family="Liberation Sans, sans-serif" font-size="13" font-weight="normal" fill="#444" >I8</text></svg><div class="a" style="left:136px;top:167px;width:111px;height:26px;background:#fff;box-sizing:border-box;border:1px solid #d6d6d6;"></div><div class="a" style="left:249px;top:167px;width:1112px;height:26px;background:#fff;box-sizing:border-box;border:1px solid #d6d6d6;"></div><svg style="left:261.6px;top:171px" width="270.3" height="20"><text x="0" y="14.2" textLength="270.3" lengthAdjust="spacingAndGlyphs" font-family="Liberation Sans, sans-serif" font-size="12.6" font-weight="normal" fill="#444" >Beginning supplies - ending supplies = Used</text></svg><svg style="left:93px;top:177px" width="8" height="5" viewBox="0 0 8 5"><path d="M0 0H7.400L3.700 4Z" fill="#777"/></svg>
<svg style="left:121px;top:175px" width="2" height="11" viewBox="0 0 2 11"><rect x="0" y="0.500" width="1.700" height="1.700" fill="#a3a3a3"/><rect x="0" y="3.300" width="1.700" height="1.700" fill="#a3a3a3"/><rect x="0" y="6.100" width="1.700" height="1.700" fill="#a3a3a3"/><rect x="0" y="8.900" width="1.700" height="1.700" fill="#a3a3a3"/></svg>
<svg style="left:150px;top:175px" width="12" height="11" viewBox="0 0 12 11"><path d="M1 0.800L10.500 9.800M10.500 0.800L1 9.800" stroke="#c2c2c2" stroke-width="1.500" fill="none"/></svg>
<svg style="left:186px;top:174px" width="14" height="12" viewBox="0 0 14 12"><path d="M0.800 6.400L4.600 10.400L12.800 1" stroke="#c6c6c6" stroke-width="1.800" fill="none"/></svg>
<div class="t" style="left:222px;top:169px;font-family:'Liberation Serif',serif;font-style:italic;font-weight:bold;font-size:16px;color:#666;letter-spacing:-0.500px;">f<span style="font-size:12.500px;">x</span></div>
<svg style="left:1349px;top:177px" width="8" height="6" viewBox="0 0 8 6"><path d="M0.600 0.800L3.800 4.200L7 0.800" stroke="#666" stroke-width="1.700" fill="none"/></svg>
<div class="a" style="left:0;top:203px;width:1345px;height:476px;overflow:hidden;background:#fff;"><div class="a" style="left:0px;top:0px;width:1345px;height:20px;background:#e6e6e6;"></div><div class="a" style="left:0px;top:20px;width:26px;height:460px;background:#e6e6e6;"></div><div class="vl" style="left:70px;top:20px;height:460px;"></div><div class="vl" style="left:126px;top:20px;height:460px;"></div><div class="vl" style="left:259px;top:20px;height:460px;"></div><div class="vl" style="left:301px;top:20px;height:460px;"></div><div class="vl" style="left:346px;top:20px;height:460px;"></div><div class="vl" style="left:363px;top:20px;height:460px;"></div><div class="vl" style="left:408px;top:20px;height:460px;"></div><div class="vl" style="left:459px;top:20px;height:460px;"></div><div class="vl" style="left:739px;top:20px;height:460px;"></div><div class="vl" style="left:780px;top:20px;height:460px;"></div><div class="vl" style="left:825px;top:20px;height:460px;"></div><div class="vl" style="left:845px;top:20px;height:460px;"></div><div class="vl" style="left:890px;top:20px;height:460px;"></div><div class="vl" style="left:941px;top:20px;height:460px;"></div><div class="vl" style="left:1248px;top:20px;height:460px;"></div><div class="vl" style="left:1290px;top:20px;height:460px;"></div><div class="vl" style="left:1335px;top:20px;height:460px;"></div><div class="hl" style="left:26px;top:39px;width:1319px;"></div><div class="hl" style="left:26px;top:59px;width:1319px;"></div><div class="hl" style="left:26px;top:79px;width:1319px;"></div><div class="hl" style="left:26px;top:99px;width:1319px;"></div><div class="hl" style="left:26px;top:119px;width:1319px;"></div><div class="hl" style="left:26px;top:159px;width:1319px;"></div><div class="hl" style="left:26px;top:179px;width:1319px;"></div><div class="hl" style="left:26px;top:199px;width:1319px;"></div><div class="hl" style="left:26px;top:219px;width:1319px;"></div><div class="hl" style="left:26px;top:239px;width:1319px;"></div><div class="hl" style="left:26px;top:259px;width:1319px;"></div><div class="hl" style="left:26px;top:279px;width:1319px;"></div><div class="hl" style="left:26px;top:299px;width:1319px;"></div><div class="hl" style="left:26px;top:319px;width:1319px;"></div><div class="hl" style="left:26px;top:359px;width:1319px;"></div><div class="hl" style="left:26px;top:379px;width:1319px;"></div><div class="hl" style="left:26px;top:399px;width:1319px;"></div><div class="hl" style="left:26px;top:419px;width:1319px;"></div><div class="hl" style="left:26px;top:439px;width:1319px;"></div><div class="hl" style="left:26px;top:459px;width:1319px;"></div><div class="hl" style="left:26px;top:479px;width:1319px;"></div><div class="a" style="left:26px;top:20px;width:320px;height:19px;background:#fff;"></div><div class="a" style="left:364px;top:20px;width:461px;height:19px;background:#fff;"></div><div class="a" style="left:846px;top:20px;width:489px;height:19px;background:#fff;"></div><div class="a" style="left:71px;top:40px;width:230px;height:19px;background:#fff;"></div><div class="a" style="left:409px;top:40px;width:371px;height:19px;background:#fff;"></div><div class="a" style="left:891px;top:40px;width:399px;height:19px;background:#fff;"></div><div class="a" style="left:26px;top:40px;width:45px;height:20px;background:#ffff00;"></div><div class="a" style="left:364px;top:40px;width:45px;height:20px;background:#8ea9db;"></div><div class="a" style="left:846px;top:40px;width:45px;height:20px;background:#8ea9db;"></div><div class="t hd" style="left:26px;top:1px;width:44px;line-height:19px;"><span>A</span></div><div class="a" style="left:70px;top:3px;width:1px;height:16px;background:#bcbcbc;"></div><div class="t hd" style="left:71px;top:1px;width:55px;line-height:19px;"><span>B</span></div><div class="a" style="left:126px;top:3px;width:1px;height:16px;background:#bcbcbc;"></div><div class="t hd" style="left:127px;top:1px;width:132px;line-height:19px;"><span>C</span></div><div class="a" style="left:259px;top:3px;width:1px;height:16px;background:#bcbcbc;"></div><div class="t hd" style="left:260px;top:1px;width:41px;line-height:19px;"><span>D</span></div><div class="a" style="left:301px;top:3px;width:1px;height:16px;background:#bcbcbc;"></div><div class="t hd" style="left:302px;top:1px;width:44px;line-height:19px;"><span>E</span></div><div class="a" style="left:346px;top:3px;width:1px;height:16px;background:#bcbcbc;"></div><div class="t hd" style="left:347px;top:1px;width:16px;line-height:19px;"><span>F</span></div><div class="a" style="left:363px;top:3px;width:1px;height:16px;background:#bcbcbc;"></div><div class="t hd" style="left:364px;top:1px;width:44px;line-height:19px;"><span>G</span></div><div class="a" style="left:408px;top:3px;width:1px;height:16px;background:#bcbcbc;"></div><div class="t hd" style="left:409px;top:1px;width:50px;line-height:19px;"><span>H</span></div><div class="a" style="left:459px;top:3px;width:1px;height:16px;background:#bcbcbc;"></div><div class="a" style="left:460px;top:0px;width:279px;height:20px;background:#d2d2d2;"></div><div class="t hd" style="left:460px;top:1px;width:279px;line-height:19px;color:#217346;"><span>I</span></div><div class="a" style="left:739px;top:3px;width:1px;height:16px;background:#bcbcbc;"></div><div class="t hd" style="left:740px;top:1px;width:40px;line-height:19px;"><span>J</span></div><div class="a" style="left:780px;top:3px;width:1px;height:16px;background:#bcbcbc;"></div><div class="t hd" style="left:781px;top:1px;width:44px;line-height:19px;"><span>K</span></div><div class="a" style="left:825px;top:3px;width:1px;height:16px;background:#bcbcbc;"></div><div class="t hd" style="left:826px;top:1px;width:19px;line-height:19px;"><span>L</span></div><div class="a" style="left:845px;top:3px;width:1px;height:16px;background:#bcbcbc;"></div><div class="t hd" style="left:846px;top:1px;width:44px;line-height:19px;"><span>M</span></div><div class="a" style="left:890px;top:3px;width:1px;height:16px;background:#bcbcbc;"></div><div class="t hd" style="left:891px;top:1px;width:50px;line-height:19px;"><span>N</span></div><div class="a" style="left:941px;top:3px;width:1px;height:16px;background:#bcbcbc;"></div><div class="t hd" style="left:942px;top:1px;width:306px;line-height:19px;"><span>O</span></div><div class="a" style="left:1248px;top:3px;width:1px;height:16px;background:#bcbcbc;"></div><div class="t hd" style="left:1249px;top:1px;width:41px;line-height:19px;"><span>P</span></div><div class="a" style="left:1290px;top:3px;width:1px;height:16px;background:#bcbcbc;"></div><div class="t hd" style="left:1291px;top:1px;width:44px;line-height:19px;"><span>Q</span></div><div class="a" style="left:1335px;top:3px;width:1px;height:16px;background:#bcbcbc;"></div><div class="t hd" style="left:1336px;top:1px;width:9px;line-height:19px;"><span></span></div><div class="a" style="left:1345px;top:3px;width:1px;height:16px;background:#bcbcbc;"></div><div class="a" style="left:0px;top:19px;width:1345px;height:1px;background:#9b9b9b;"></div><div class="a" style="left:460px;top:18px;width:280px;height:2px;background:#217346;"></div><div class="t hd" style="left:0;top:21px;width:25px;"><span>1</span></div><div class="a" style="left:0px;top:39px;width:25px;height:1px;background:#b1b1b1;"></div><div class="t hd" style="left:0;top:41px;width:25px;"><span>2</span></div><div class="a" style="left:0px;top:59px;width:25px;height:1px;background:#b1b1b1;"></div><div class="t hd" style="left:0;top:61px;width:25px;"><span>3</span></div><div class="a" style="left:0px;top:79px;width:25px;height:1px;background:#b1b1b1;"></div><div class="t hd" style="left:0;top:81px;width:25px;"><span>4</span></div><div class="a" style="left:0px;top:99px;width:25px;height:1px;background:#b1b1b1;"></div><div class="t hd" style="left:0;top:101px;width:25px;"><span>5</span></div><div class="a" style="left:0px;top:119px;width:25px;height:1px;background:#b1b1b1;"></div><div class="t hd" style="left:0;top:141px;width:25px;"><span>6</span></div><div class="a" style="left:0px;top:159px;width:25px;height:1px;background:#b1b1b1;"></div><div class="t hd" style="left:0;top:161px;width:25px;"><span>7</span></div><div class="a" style="left:0px;top:179px;width:25px;height:1px;background:#b1b1b1;"></div><div class="a" style="left:0px;top:180px;width:25px;height:20px;background:#d2d2d2;"></div><div class="t hd" style="left:0;top:181px;width:25px;color:#217346;"><span>8</span></div><div class="a" style="left:0px;top:199px;width:25px;height:1px;background:#b1b1b1;"></div><div class="t hd" style="left:0;top:201px;width:25px;"><span>9</span></div><div class="a" style="left:0px;top:219px;width:25px;height:1px;background:#b1b1b1;"></div><div class="t hd" style="left:0;top:221px;width:25px;"><span>10</span></div><div class="a" style="left:0px;top:239px;width:25px;height:1px;background:#b1b1b1;"></div><div class="t hd" style="left:0;top:241px;width:25px;"><span>11</span></div><div class="a" style="left:0px;top:259px;width:25px;height:1px;background:#b1b1b1;"></div><div class="t hd" style="left:0;top:261px;width:25px;"><span>12</span></div><div class="a" style="left:0px;top:279px;width:25px;height:1px;background:#b1b1b1;"></div><div class="t hd" style="left:0;top:281px;width:25px;"><span>13</span></div><div class="a" style="left:0px;top:299px;width:25px;height:1px;background:#b1b1b1;"></div><div class="t hd" style="left:0;top:301px;width:25px;"><span>14</span></div><div class="a" style="left:0px;top:319px;width:25px;height:1px;background:#b1b1b1;"></div><div class="t hd" style="left:0;top:341px;width:25px;"><span>15</span></div><div class="a" style="left:0px;top:359px;width:25px;height:1px;background:#b1b1b1;"></div><div class="t hd" style="left:0;top:361px;width:25px;"><span>16</span></div><div class="a" style="left:0px;top:379px;width:25px;height:1px;background:#b1b1b1;"></div><div class="t hd" style="left:0;top:381px;width:25px;"><span>17</span></div><div class="a" style="left:0px;top:399px;width:25px;height:1px;background:#b1b1b1;"></div><div class="t hd" style="left:0;top:401px;width:25px;"><span>18</span></div><div class="a" style="left:0px;top:419px;width:25px;height:1px;background:#b1b1b1;"></div><div class="t hd" style="left:0;top:421px;width:25px;"><span>19</span></div><div class="a" style="left:0px;top:439px;width:25px;height:1px;background:#b1b1b1;"></div><div class="t hd" style="left:0;top:441px;width:25px;"><span>20</span></div><div class="a" style="left:0px;top:459px;width:25px;height:1px;background:#b1b1b1;"></div><div class="t hd" style="left:0;top:461px;width:25px;"><span>21</span></div><div class="a" style="left:0px;top:479px;width:25px;height:1px;background:#b1b1b1;"></div><div class="a" style="left:25px;top:20px;width:1px;height:460px;background:#9b9b9b;"></div><div class="a" style="left:24px;top:180px;width:2px;height:20px;background:#217346;"></div><svg style="left:9px;top:4px" width="13" height="13"><path d="M13 0V13H0Z" fill="#b4b4b4"/></svg><svg style="left:135.5px;top:21px" width="101.0" height="20"><text x="0" y="14" textLength="101.0" lengthAdjust="spacingAndGlyphs" font-family="Liberation Sans, sans-serif" font-size="12.600" font-weight="normal" font-style="normal" fill="#000">Pipers Plumbing</text></svg><svg style="left:140.4px;top:41px" width="91.2" height="20"><text x="0" y="14" textLength="91.2" lengthAdjust="spacingAndGlyphs" font-family="Liberation Sans, sans-serif" font-size="12.600" font-weight="normal" font-style="normal" fill="#000">Journal Entries</text></svg><div class="t cb" style="left:28px;top:41px;"><span style="transform-origin:0 50%">Req. 1</span></div><svg style="left:73.1px;top:61px" width="28.2" height="20"><text x="0" y="14" textLength="28.2" lengthAdjust="spacingAndGlyphs" font-family="Liberation Sans, sans-serif" font-size="12.600" font-weight="normal" font-style="normal" fill="#000">Date</text></svg><svg style="left:129.1px;top:61px" width="80.7" height="20"><text x="0" y="14" textLength="80.7" lengthAdjust="spacingAndGlyphs" font-family="Liberation Sans, sans-serif" font-size="12.600" font-weight="normal" font-style="normal" fill="#000">Account Title</text></svg><svg style="left:262.1px;top:61px" width="33.6" height="20"><text x="0" y="14" textLength="33.6" lengthAdjust="spacingAndGlyphs" font-family="Liberation Sans, sans-serif" font-size="12.600" font-weight="normal" font-style="normal" fill="#000">Debit</text></svg><svg style="left:304.1px;top:61px" width="37.7" height="20"><text x="0" y="14" textLength="37.7" lengthAdjust="spacingAndGlyphs" font-family="Liberation Sans, sans-serif" font-size="12.600" font-weight="normal" font-style="normal" fill="#000">Credit</text></svg><div class="t n" style="left:26px;width:42px;top:81px;text-align:right;"><span style="transform-origin:100% 50%">1</span></div><svg style="left:73.1px;top:81px" width="41.3" height="20"><text x="0" y="14" textLength="41.3" lengthAdjust="spacingAndGlyphs" font-family="Liberation Sans, sans-serif" font-size="12.600" font-weight="normal" font-style="normal" fill="#000">Jan. 24</text></svg><svg style="left:129.1px;top:81px" width="28.9" height="20"><text x="0" y="14" textLength="28.9" lengthAdjust="spacingAndGlyphs" font-family="Liberation Sans, sans-serif" font-size="12.600" font-weight="normal" font-style="normal" fill="#000">Cash</text></svg><div class="t n" style="left:260px;width:39px;top:81px;text-align:right;"><span style="transform-origin:100% 50%">12500</span></div><svg style="left:129.1px;top:101px" width="123.8" height="20"><text x="0" y="14" textLength="123.8" lengthAdjust="spacingAndGlyphs" font-family="Liberation Sans, sans-serif" font-size="12.600" font-weight="normal" font-style="normal" fill="#000">Accounts receivable</text></svg><div class="t n" style="left:260px;width:39px;top:101px;text-align:right;"><span style="transform-origin:100% 50%">57500</span></div><svg style="left:129.1px;top:141px" width="99.7" height="20"><text x="0" y="14" textLength="99.7" lengthAdjust="spacingAndGlyphs" font-family="Liberation Sans, sans-serif" font-size="12.600" font-weight="normal" font-style="normal" fill="#000">Service revenue</text></svg><div class="t n" style="left:302px;width:42px;top:141px;text-align:right;"><span style="transform-origin:100% 50%">70000</span></div><div class="t n" style="left:26px;width:42px;top:161px;text-align:right;"><span style="transform-origin:100% 50%">2</span></div><svg style="left:73.1px;top:161px" width="44.8" height="20"><text x="0" y="14" textLength="44.8" lengthAdjust="spacingAndGlyphs" font-family="Liberation Sans, sans-serif" font-size="12.600" font-weight="normal" font-style="normal" fill="#000">Mar. 13</text></svg><svg style="left:129.1px;top:161px" width="28.9" height="20"><text x="0" y="14" textLength="28.9" lengthAdjust="spacingAndGlyphs" font-family="Liberation Sans, sans-serif" font-size="12.600" font-weight="normal" font-style="normal" fill="#000">Cash</text></svg><div class="t n" style="left:260px;width:39px;top:161px;text-align:right;"><span style="transform-origin:100% 50%">45500</span></div><svg style="left:129.1px;top:181px" width="123.8" height="20"><text x="0" y="14" textLength="123.8" lengthAdjust="spacingAndGlyphs" font-family="Liberation Sans, sans-serif" font-size="12.600" font-weight="normal" font-style="normal" fill="#000">Accounts receivable</text></svg><div class="t n" style="left:302px;width:42px;top:181px;text-align:right;"><span style="transform-origin:100% 50%">45500</span></div><div class="t n" style="left:26px;width:42px;top:201px;text-align:right;"><span style="transform-origin:100% 50%">3</span></div><svg style="left:73.1px;top:201px" width="40.0" height="20"><text x="0" y="14" textLength="40.0" lengthAdjust="spacingAndGlyphs" font-family="Liberation Sans, sans-serif" font-size="12.600" font-weight="normal" font-style="normal" fill="#000">May. 6</text></svg><svg style="left:129.1px;top:201px" width="28.9" height="20"><text x="0" y="14" textLength="28.9" lengthAdjust="spacingAndGlyphs" font-family="Liberation Sans, sans-serif" font-size="12.600" font-weight="normal" font-style="normal" fill="#000">Cash</text></svg><div class="t n" style="left:260px;width:39px;top:201px;text-align:right;"><span style="transform-origin:100% 50%">10000</span></div><svg style="left:129.1px;top:221px" width="90.8" height="20"><text x="0" y="14" textLength="90.8" lengthAdjust="spacingAndGlyphs" font-family="Liberation Sans, sans-serif" font-size="12.600" font-weight="normal" font-style="normal" fill="#000">Common stock</text></svg><div class="t n" style="left:302px;width:42px;top:221px;text-align:right;"><span style="transform-origin:100% 50%">10000</span></div><div class="t n" style="left:26px;width:42px;top:241px;text-align:right;"><span style="transform-origin:100% 50%">4</span></div><svg style="left:73.1px;top:241px" width="42.7" height="20"><text x="0" y="14" textLength="42.7" lengthAdjust="spacingAndGlyphs" font-family="Liberation Sans, sans-serif" font-size="12.600" font-weight="normal" font-style="normal" fill="#000">Jun. 30</text></svg><svg style="left:129.1px;top:241px" width="103.8" height="20"><text x="0" y="14" textLength="103.8" lengthAdjust="spacingAndGlyphs" font-family="Liberation Sans, sans-serif" font-size="12.600" font-weight="normal" font-style="normal" fill="#000">Salaries expense</text></svg><div class="t n" style="left:260px;width:39px;top:241px;text-align:right;"><span style="transform-origin:100% 50%">31500</span></div><svg style="left:129.1px;top:261px" width="28.9" height="20"><text x="0" y="14" textLength="28.9" lengthAdjust="spacingAndGlyphs" font-family="Liberation Sans, sans-serif" font-size="12.600" font-weight="normal" font-style="normal" fill="#000">Cash</text></svg><div class="t n" style="left:302px;width:42px;top:261px;text-align:right;"><span style="transform-origin:100% 50%">31500</span></div><div class="t n" style="left:26px;width:42px;top:281px;text-align:right;"><span style="transform-origin:100% 50%">5</span></div><svg style="left:73.1px;top:281px" width="48.5" height="20"><text x="0" y="14" textLength="48.5" lengthAdjust="spacingAndGlyphs" font-family="Liberation Sans, sans-serif" font-size="12.600" font-weight="normal" font-style="normal" fill="#000">Sept. 15</text></svg><svg style="left:129.1px;top:281px" width="100.8" height="20"><text x="0" y="14" textLength="100.8" lengthAdjust="spacingAndGlyphs" font-family="Liberation Sans, sans-serif" font-size="12.600" font-weight="normal" font-style="normal" fill="#000">Utilities payable</text></svg><div class="t n" style="left:260px;width:39px;top:281px;text-align:right;"><span style="transform-origin:100% 50%">4000</span></div><svg style="left:129.1px;top:301px" width="28.9" height="20"><text x="0" y="14" textLength="28.9" lengthAdjust="spacingAndGlyphs" font-family="Liberation Sans, sans-serif" font-size="12.600" font-weight="normal" font-style="normal" fill="#000">Cash</text></svg><div class="t n" style="left:302px;width:42px;top:301px;text-align:right;"><span style="transform-origin:100% 50%">4000</span></div><div class="t n" style="left:26px;width:42px;top:341px;text-align:right;"><span style="transform-origin:100% 50%">6</span></div><svg style="left:73.1px;top:341px" width="46.1" height="20"><text x="0" y="14" textLength="46.1" lengthAdjust="spacingAndGlyphs" font-family="Liberation Sans, sans-serif" font-size="12.600" font-weight="normal" font-style="normal" fill="#000">Nov. 24</text></svg><svg style="left:129.1px;top:341px" width="28.9" height="20"><text x="0" y="14" textLength="28.9" lengthAdjust="spacingAndGlyphs" font-family="Liberation Sans, sans-serif" font-size="12.600" font-weight="normal" font-style="normal" fill="#000">Cash</text></svg><div class="t n" style="left:260px;width:39px;top:341px;text-align:right;"><span style="transform-origin:100% 50%">7000</span></div><svg style="left:129.1px;top:361px" width="115.9" height="20"><text x="0" y="14" textLength="115.9" lengthAdjust="spacingAndGlyphs" font-family="Liberation Sans, sans-serif" font-size="12.600" font-weight="normal" font-style="normal" fill="#000">Unearned revenue</text></svg><div class="t n" style="left:302px;width:42px;top:361px;text-align:right;"><span style="transform-origin:100% 50%">7000</span></div><div class="t n" style="left:26px;width:42px;top:381px;text-align:right;"><span style="transform-origin:100% 50%">7</span></div><svg style="left:73.1px;top:381px" width="44.1" height="20"><text x="0" y="14" textLength="44.1" lengthAdjust="spacingAndGlyphs" font-family="Liberation Sans, sans-serif" font-size="12.600" font-weight="normal" font-style="normal" fill="#000">Dec. 30</text></svg><svg style="left:129.1px;top:381px" width="62.1" height="20"><text x="0" y="14" textLength="62.1" lengthAdjust="spacingAndGlyphs" font-family="Liberation Sans, sans-serif" font-size="12.600" font-weight="normal" font-style="normal" fill="#000">Dividends</text></svg><div class="t n" style="left:260px;width:39px;top:381px;text-align:right;"><span style="transform-origin:100% 50%">1500</span></div><svg style="left:129.1px;top:401px" width="28.9" height="20"><text x="0" y="14" textLength="28.9" lengthAdjust="spacingAndGlyphs" font-family="Liberation Sans, sans-serif" font-size="12.600" font-weight="normal" font-style="normal" fill="#000">Cash</text></svg><div class="t n" style="left:302px;width:42px;top:401px;text-align:right;"><span style="transform-origin:100% 50%">1500</span></div><svg style="left:544.0px;top:21px" width="101.0" height="20"><text x="0" y="14" textLength="101.0" lengthAdjust="spacingAndGlyphs" font-family="Liberation Sans, sans-serif" font-size="12.600" font-weight="normal" font-style="normal" fill="#000">Pipers Plumbing</text></svg><svg style="left:542.0px;top:41px" width="105.0" height="20"><text x="0" y="14" textLength="105.0" lengthAdjust="spacingAndGlyphs" font-family="Liberation Sans, sans-serif" font-size="12.600" font-weight="normal" font-style="normal" fill="#000">Adjusting Entries</text></svg><div class="t cb" style="left:366px;top:41px;"><span style="transform-origin:0 50%">Req. 2</span></div><svg style="left:411.1px;top:61px" width="28.2" height="20"><text x="0" y="14" textLength="28.2" lengthAdjust="spacingAndGlyphs" font-family="Liberation Sans, sans-serif" font-size="12.600" font-weight="normal" font-style="normal" fill="#000">Date</text></svg><svg style="left:462.1px;top:61px" width="80.7" height="20"><text x="0" y="14" textLength="80.7" lengthAdjust="spacingAndGlyphs" font-family="Liberation Sans, sans-serif" font-size="12.600" font-weight="normal" font-style="normal" fill="#000">Account Title</text></svg><svg style="left:742.1px;top:61px" width="33.6" height="20"><text x="0" y="14" textLength="33.6" lengthAdjust="spacingAndGlyphs" font-family="Liberation Sans, sans-serif" font-size="12.600" font-weight="normal" font-style="normal" fill="#000">Debit</text></svg><svg style="left:783.1px;top:61px" width="37.7" height="20"><text x="0" y="14" textLength="37.7" lengthAdjust="spacingAndGlyphs" font-family="Liberation Sans, sans-serif" font-size="12.600" font-weight="normal" font-style="normal" fill="#000">Credit</text></svg><div class="t n" style="left:364px;width:42px;top:81px;text-align:right;"><span style="transform-origin:100% 50%">8</span></div><svg style="left:411.1px;top:81px" width="44.0" height="20"><text x="0" y="14" textLength="44.0" lengthAdjust="spacingAndGlyphs" font-family="Liberation Sans, sans-serif" font-size="12.600" font-weight="normal" font-style="normal" fill="#000">Dec. 31</text></svg><svg style="left:462.1px;top:81px" width="136.0" height="20"><text x="0" y="14" textLength="136.0" lengthAdjust="spacingAndGlyphs" font-family="Liberation Sans, sans-serif" font-size="12.600" font-weight="normal" font-style="normal" fill="#000">Depreciation expense</text></svg><div class="t n" style="left:740px;width:38px;top:81px;text-align:right;"><span style="transform-origin:100% 50%">5000</span></div><svg style="left:462.1px;top:101px" width="233.0" height="20"><text x="0" y="14" textLength="233.0" lengthAdjust="spacingAndGlyphs" font-family="Liberation Sans, sans-serif" font-size="12.600" font-weight="normal" font-style="normal" fill="#000">Accumulated depreciation-machinery</text></svg><div class="t n" style="left:781px;width:42px;top:101px;text-align:right;"><span style="transform-origin:100% 50%">5000</span></div><div class="t n" style="left:364px;width:42px;top:141px;text-align:right;"><span style="transform-origin:100% 50%">9</span></div><svg style="left:411.1px;top:141px" width="44.0" height="20"><text x="0" y="14" textLength="44.0" lengthAdjust="spacingAndGlyphs" font-family="Liberation Sans, sans-serif" font-size="12.600" font-weight="normal" font-style="normal" fill="#000">Dec. 31</text></svg><svg style="left:462.1px;top:141px" width="108.7" height="20"><text x="0" y="14" textLength="108.7" lengthAdjust="spacingAndGlyphs" font-family="Liberation Sans, sans-serif" font-size="12.600" font-weight="normal" font-style="normal" fill="#000">Supplies expense</text></svg><div class="t n" style="left:740px;width:38px;top:141px;text-align:right;"><span style="transform-origin:100% 50%">1750</span></div><svg style="left:462.1px;top:161px" width="52.7" height="20"><text x="0" y="14" textLength="52.7" lengthAdjust="spacingAndGlyphs" font-family="Liberation Sans, sans-serif" font-size="12.600" font-weight="normal" font-style="normal" fill="#000">Supplies</text></svg><div class="t n" style="left:781px;width:42px;top:161px;text-align:right;"><span style="transform-origin:100% 50%">1750</span></div><div class="t n" style="left:364px;width:42px;top:221px;text-align:right;"><span style="transform-origin:100% 50%">10</span></div><svg style="left:411.1px;top:221px" width="44.0" height="20"><text x="0" y="14" textLength="44.0" lengthAdjust="spacingAndGlyphs" font-family="Liberation Sans, sans-serif" font-size="12.600" font-weight="normal" font-style="normal" fill="#000">Dec. 31</text></svg><svg style="left:462.1px;top:221px" width="115.9" height="20"><text x="0" y="14" textLength="115.9" lengthAdjust="spacingAndGlyphs" font-family="Liberation Sans, sans-serif" font-size="12.600" font-weight="normal" font-style="normal" fill="#000">Unearned revenue</text></svg><div class="t n" style="left:740px;width:38px;top:221px;text-align:right;"><span style="transform-origin:100% 50%">5500</span></div><svg style="left:462.1px;top:241px" width="99.7" height="20"><text x="0" y="14" textLength="99.7" lengthAdjust="spacingAndGlyphs" font-family="Liberation Sans, sans-serif" font-size="12.600" font-weight="normal" font-style="normal" fill="#000">Service revenue</text></svg><div class="t n" style="left:781px;width:42px;top:241px;text-align:right;"><span style="transform-origin:100% 50%">5500</span></div><div class="t n" style="left:364px;width:42px;top:261px;text-align:right;"><span style="transform-origin:100% 50%">11</span></div><svg style="left:411.1px;top:261px" width="44.0" height="20"><text x="0" y="14" textLength="44.0" lengthAdjust="spacingAndGlyphs" font-family="Liberation Sans, sans-serif" font-size="12.600" font-weight="normal" font-style="normal" fill="#000">Dec. 31</text></svg><svg style="left:462.1px;top:261px" width="104.7" height="20"><text x="0" y="14" textLength="104.7" lengthAdjust="spacingAndGlyphs" font-family="Liberation Sans, sans-serif" font-size="12.600" font-weight="normal" font-style="normal" fill="#000">Utilities expense</text></svg><div class="t n" style="left:740px;width:38px;top:261px;text-align:right;"><span style="transform-origin:100% 50%">7500</span></div><svg style="left:462.1px;top:281px" width="100.8" height="20"><text x="0" y="14" textLength="100.8" lengthAdjust="spacingAndGlyphs" font-family="Liberation Sans, sans-serif" font-size="12.600" font-weight="normal" font-style="normal" fill="#000">Utilities payable</text></svg><div class="t n" style="left:781px;width:42px;top:281px;text-align:right;"><span style="transform-origin:100% 50%">7500</span></div><svg style="left:411.1px;top:181px" width="34.8" height="20"><text x="0" y="14" textLength="34.8" lengthAdjust="spacingAndGlyphs" font-family="Liberation Sans, sans-serif" font-size="12.600" font-weight="normal" font-style="italic" fill="#000">Note:</text></svg><svg style="left:462.1px;top:181px" width="261.8" height="20"><text x="0" y="14" textLength="261.8" lengthAdjust="spacingAndGlyphs" font-family="Liberation Sans, sans-serif" font-size="12.600" font-weight="normal" font-style="italic" fill="#000">Beginning supplies - ending supplies = Used</text></svg><svg style="left:462.1px;top:201px" width="120.3" height="20"><text x="0" y="14" textLength="120.3" lengthAdjust="spacingAndGlyphs" font-family="Liberation Sans, sans-serif" font-size="12.600" font-weight="normal" font-style="italic" fill="#000">2,750 - 1,000 = 1,750</text></svg><svg style="left:411.1px;top:341px" width="34.8" height="20"><text x="0" y="14" textLength="34.8" lengthAdjust="spacingAndGlyphs" font-family="Liberation Sans, sans-serif" font-size="12.600" font-weight="normal" font-style="italic" fill="#000">Note:</text></svg><svg style="left:462.1px;top:321px" width="264.0" height="20"><text x="0" y="14" textLength="264.0" lengthAdjust="spacingAndGlyphs" font-family="Liberation Sans, sans-serif" font-size="12.600" font-weight="bold" font-style="italic" fill="#000">Remember, adjusting entries are posted on</text></svg><svg style="left:462.1px;top:341px" width="177.8" height="20"><text x="0" y="14" textLength="177.8" lengthAdjust="spacingAndGlyphs" font-family="Liberation Sans, sans-serif" font-size="12.600" font-weight="bold" font-style="italic" fill="#000">the last day of the fiscal year</text></svg><svg style="left:1040.0px;top:21px" width="101.0" height="20"><text x="0" y="14" textLength="101.0" lengthAdjust="spacingAndGlyphs" font-family="Liberation Sans, sans-serif" font-size="12.600" font-weight="normal" font-style="normal" fill="#000">Pipers Plumbing</text></svg><svg style="left:1044.8px;top:41px" width="91.5" height="20"><text x="0" y="14" textLength="91.5" lengthAdjust="spacingAndGlyphs" font-family="Liberation Sans, sans-serif" font-size="12.600" font-weight="normal" font-style="normal" fill="#000">Closing Entries</text></svg><div class="t cb" style="left:848px;top:41px;"><span style="transform-origin:0 50%">Req. 3</span></div><svg style="left:893.1px;top:61px" width="28.2" height="20"><text x="0" y="14" textLength="28.2" lengthAdjust="spacingAndGlyphs" font-family="Liberation Sans, sans-serif" font-size="12.600" font-weight="normal" font-style="normal" fill="#000">Date</text></svg><svg style="left:944.1px;top:61px" width="80.7" height="20"><text x="0" y="14" textLength="80.7" lengthAdjust="spacingAndGlyphs" font-family="Liberation Sans, sans-serif" font-size="12.600" font-weight="normal" font-style="normal" fill="#000">Account Title</text></svg><svg style="left:1251.1px;top:61px" width="33.6" height="20"><text x="0" y="14" textLength="33.6" lengthAdjust="spacingAndGlyphs" font-family="Liberation Sans, sans-serif" font-size="12.600" font-weight="normal" font-style="normal" fill="#000">Debit</text></svg><svg style="left:1293.1px;top:61px" width="37.7" height="20"><text x="0" y="14" textLength="37.7" lengthAdjust="spacingAndGlyphs" font-family="Liberation Sans, sans-serif" font-size="12.600" font-weight="normal" font-style="normal" fill="#000">Credit</text></svg><div class="t n" style="left:846px;width:42px;top:81px;text-align:right;"><span style="transform-origin:100% 50%">12</span></div><svg style="left:893.1px;top:81px" width="44.0" height="20"><text x="0" y="14" textLength="44.0" lengthAdjust="spacingAndGlyphs" font-family="Liberation Sans, sans-serif" font-size="12.600" font-weight="normal" font-style="normal" fill="#000">Dec. 31</text></svg><svg style="left:944.1px;top:81px" width="102.7" height="20"><text x="0" y="14" textLength="102.7" lengthAdjust="spacingAndGlyphs" font-family="Liberation Sans, sans-serif" font-size="12.600" font-weight="normal" font-style="normal" fill="#000">Service Revenue</text></svg><div class="t n" style="left:1249px;width:39px;top:81px;text-align:right;"><span style="transform-origin:100% 50%">75500</span></div><svg style="left:944.1px;top:101px" width="223.8" height="20"><text x="0" y="14" textLength="223.8" lengthAdjust="spacingAndGlyphs" font-family="Liberation Sans, sans-serif" font-size="12.600" font-weight="normal" font-style="normal" fill="#000">Retained Earnings/Income Summary</text></svg><div class="t n" style="left:1291px;width:42px;top:101px;text-align:right;"><span style="transform-origin:100% 50%">75500</span></div><div class="t n" style="left:846px;width:42px;top:181px;text-align:right;"><span style="transform-origin:100% 50%">13</span></div><svg style="left:893.1px;top:181px" width="44.0" height="20"><text x="0" y="14" textLength="44.0" lengthAdjust="spacingAndGlyphs" font-family="Liberation Sans, sans-serif" font-size="12.600" font-weight="normal" font-style="normal" fill="#000">Dec. 31</text></svg><svg style="left:944.1px;top:181px" width="223.8" height="20"><text x="0" y="14" textLength="223.8" lengthAdjust="spacingAndGlyphs" font-family="Liberation Sans, sans-serif" font-size="12.600" font-weight="normal" font-style="normal" fill="#000">Retained Earnings/Income Summary</text></svg><div class="t n" style="left:1249px;width:39px;top:181px;text-align:right;"><span style="transform-origin:100% 50%">45750</span></div><svg style="left:944.1px;top:201px" width="136.0" height="20"><text x="0" y="14" textLength="136.0" lengthAdjust="spacingAndGlyphs" font-family="Liberation Sans, sans-serif" font-size="12.600" font-weight="normal" font-style="normal" fill="#000">Depreciation expense</text></svg><div class="t n" style="left:1291px;width:42px;top:201px;text-align:right;"><span style="transform-origin:100% 50%">5000</span></div><svg style="left:944.1px;top:221px" width="108.7" height="20"><text x="0" y="14" textLength="108.7" lengthAdjust="spacingAndGlyphs" font-family="Liberation Sans, sans-serif" font-size="12.600" font-weight="normal" font-style="normal" fill="#000">Supplies expense</text></svg><div class="t n" style="left:1291px;width:42px;top:221px;text-align:right;"><span style="transform-origin:100% 50%">1750</span></div><svg style="left:944.1px;top:241px" width="104.7" height="20"><text x="0" y="14" textLength="104.7" lengthAdjust="spacingAndGlyphs" font-family="Liberation Sans, sans-serif" font-size="12.600" font-weight="normal" font-style="normal" fill="#000">Utilities expense</text></svg><div class="t n" style="left:1291px;width:42px;top:241px;text-align:right;"><span style="transform-origin:100% 50%">7500</span></div><svg style="left:944.1px;top:261px" width="103.8" height="20"><text x="0" y="14" textLength="103.8" lengthAdjust="spacingAndGlyphs" font-family="Liberation Sans, sans-serif" font-size="12.600" font-weight="normal" font-style="normal" fill="#000">Salaries expense</text></svg><div class="t n" style="left:1291px;width:42px;top:261px;text-align:right;"><span style="transform-origin:100% 50%">31500</span></div><div class="t n" style="left:846px;width:42px;top:281px;text-align:right;"><span style="transform-origin:100% 50%">14</span></div><svg style="left:893.1px;top:281px" width="44.0" height="20"><text x="0" y="14" textLength="44.0" lengthAdjust="spacingAndGlyphs" font-family="Liberation Sans, sans-serif" font-size="12.600" font-weight="normal" font-style="normal" fill="#000">Dec. 31</text></svg><svg style="left:944.1px;top:281px" width="223.8" height="20"><text x="0" y="14" textLength="223.8" lengthAdjust="spacingAndGlyphs" font-family="Liberation Sans, sans-serif" font-size="12.600" font-weight="normal" font-style="normal" fill="#000">Retained Earnings/Income Summary</text></svg><div class="t n" style="left:1249px;width:39px;top:281px;text-align:right;"><span style="transform-origin:100% 50%">1500</span></div><svg style="left:944.1px;top:301px" width="62.1" height="20"><text x="0" y="14" textLength="62.1" lengthAdjust="spacingAndGlyphs" font-family="Liberation Sans, sans-serif" font-size="12.600" font-weight="normal" font-style="normal" fill="#000">Dividends</text></svg><div class="t n" style="left:1291px;width:42px;top:301px;text-align:right;"><span style="transform-origin:100% 50%">1500</span></div><svg style="left:893.1px;top:141px" width="34.8" height="20"><text x="0" y="14" textLength="34.8" lengthAdjust="spacingAndGlyphs" font-family="Liberation Sans, sans-serif" font-size="12.600" font-weight="bold" font-style="italic" fill="#000">Note:</text></svg><svg style="left:944.1px;top:121px" width="271.4" height="20"><text x="0" y="14" textLength="271.4" lengthAdjust="spacingAndGlyphs" font-family="Liberation Sans, sans-serif" font-size="12.600" font-weight="bold" font-style="italic" fill="#000">Service revenue is from January 24 sales and</text></svg><svg style="left:944.1px;top:141px" width="299.4" height="20"><text x="0" y="14" textLength="299.4" lengthAdjust="spacingAndGlyphs" font-family="Liberation Sans, sans-serif" font-size="12.600" font-weight="bold" font-style="italic" fill="#000">adjusted revenue in adjusting journal number 10</text></svg><svg style="left:944.1px;top:161px" width="136.3" height="20"><text x="0" y="14" textLength="136.3" lengthAdjust="spacingAndGlyphs" font-family="Liberation Sans, sans-serif" font-size="12.600" font-weight="bold" font-style="italic" fill="#000">70,000 + 5,500 = 75,500</text></svg><svg style="left:944.1px;top:321px" width="247.0" height="20"><text x="0" y="14" textLength="247.0" lengthAdjust="spacingAndGlyphs" font-family="Liberation Sans, sans-serif" font-size="12.600" font-weight="normal" font-style="normal" fill="#000">Closing entries are required to close the</text></svg><svg style="left:944.1px;top:341px" width="248.2" height="20"><text x="0" y="14" textLength="248.2" lengthAdjust="spacingAndGlyphs" font-family="Liberation Sans, sans-serif" font-size="12.600" font-weight="normal" font-style="normal" fill="#000">temporary accounts, income statements</text></svg><div class="a" style="left:458px;top:178px;width:279px;height:19px;border:2px solid #217346;"></div><div class="a" style="left:736px;top:196px;width:5px;height:5px;background:#217346;border:1px solid #fff;"></div></div><div class="a" style="left:1345px;top:203px;width:21px;height:476px;background:#e6e6e6;"></div><div class="a" style="left:1344px;top:222px;width:1px;height:457px;background:#9b9b9b;"></div>
<div class="a" style="left:1348px;top:205px;width:15px;height:15px;box-sizing:border-box;border:1px solid #c8c8c8;background:#fff;"></div>
<svg style="left:1352px;top:210px" width="8" height="5" viewBox="0 0 8 5"><path d="M0 4.200H7.200L3.600 0.300Z" fill="#777"/></svg>
<div class="a" style="left:1348px;top:220px;width:15px;height:419px;box-sizing:border-box;border:1px solid #c8c8c8;background:#fff;"></div>
<div class="a" style="left:1348px;top:639px;width:15px;height:25px;background:#d6d6d6;"></div>
<div class="a" style="left:1348px;top:664px;width:15px;height:14px;box-sizing:border-box;border:1px solid #c8c8c8;background:#fff;"></div>
<svg style="left:1352px;top:669px" width="8" height="5" viewBox="0 0 8 5"><path d="M0 0.300H7.200L3.600 4.200Z" fill="#777"/></svg>
<div class="a" style="left:0px;top:679px;width:1366px;height:27px;background:#e6e6e6;"></div><div class="a" style="left:0px;top:678px;width:1345px;height:1px;background:#9b9b9b;"></div><div class="a" style="left:0;top:705px;width:1366px;height:1px;background:#cfcfcf;"></div>
<svg style="left:27px;top:687px" width="5" height="9" viewBox="0 0 5 9"><path d="M4.500 0.300V8.300L0.400 4.300Z" fill="#c3c3c3"/></svg>
<svg style="left:56px;top:687px" width="5" height="9" viewBox="0 0 5 9"><path d="M0.400 0.300V8.300L4.500 4.300Z" fill="#c3c3c3"/></svg>
<div class="a" style="left:100px;top:678px;width:63px;height:22px;background:#fff;border-bottom:2px solid #217346;border-left:1px solid #bdbdbd;border-right:1px solid #bdbdbd;box-sizing:content-box;"></div>
<div class="a" style="left:101px;top:678px;width:63px;height:1px;background:#fff;"></div>
<svg style="left:112.0px;top:682px" width="40.4" height="20"><text x="0" y="14.2" textLength="40.4" lengthAdjust="spacingAndGlyphs" font-family="Liberation Sans, sans-serif" font-size="12.5" font-weight="bold" fill="#217346">Sheet1</text></svg>
<svg style="left:197px;top:683px" width="18" height="18" viewBox="0 0 18 18"><circle cx="9" cy="8.700" r="7.600" fill="none" stroke="#7a7a7a" stroke-width="1.100"/><path d="M9 4.700V12.700M5 8.700H13" stroke="#666" stroke-width="1.500"/></svg>
<svg style="left:819px;top:687px" width="2" height="11" viewBox="0 0 2 11"><rect x="0" y="0.500" width="1.600" height="1.600" fill="#a9a9a9"/><rect x="0" y="4.200" width="1.600" height="1.600" fill="#a9a9a9"/><rect x="0" y="7.900" width="1.600" height="1.600" fill="#a9a9a9"/></svg>
<div class="a" style="left:836px;top:685px;width:15px;height:15px;box-sizing:border-box;border:1px solid #ababab;background:#fff;"></div>
<svg style="left:841px;top:688px" width="5" height="9" viewBox="0 0 5 9"><path d="M4.600 0.200V8.400L0.300 4.300Z" fill="#666"/></svg>
<div class="a" style="left:850px;top:685px;width:451px;height:15px;box-sizing:border-box;border:1px solid #ababab;background:#fff;"></div>
<div class="a" style="left:1301px;top:685px;width:30px;height:15px;background:#d6d6d6;"></div>
<div class="a" style="left:1330px;top:685px;width:15px;height:15px;box-sizing:border-box;border:1px solid #c8c8c8;background:#fff;"></div>
<svg style="left:1336px;top:688px" width="5" height="9" viewBox="0 0 5 9"><path d="M0.300 0.200V8.400L4.600 4.300Z" fill="#666"/></svg>
<div class="a" style="left:0px;top:706px;width:1366px;height:22px;background:#f3f3f3;"></div><div class="a" style="left:1080px;top:706px;width:38px;height:22px;background:#c8c8c8;"></div>
<svg style="left:1092px;top:710px" width="13" height="13" viewBox="0 0 13 13"><path d="M0.500 0.500H12.500V12.500H0.500ZM0.500 4.500H12.500M0.500 8.500H12.500M4.500 0.500V12.500M8.500 0.500V12.500" fill="none" stroke="#666" stroke-width="1"/></svg>
<svg style="left:1130px;top:710px" width="14" height="13" viewBox="0 0 14 13"><rect x="0.500" y="0.500" width="13" height="12" fill="none" stroke="#666"/><rect x="3.500" y="2.500" width="7" height="8" fill="none" stroke="#666"/><path d="M5 5.500H9M5 7.500H9" stroke="#666"/></svg>
<svg style="left:1168px;top:710px" width="14" height="13" viewBox="0 0 14 13"><rect x="0.500" y="0.500" width="13" height="12" fill="none" stroke="#666"/><path d="M4.500 0.500V7.500H0.500M4.500 7.500H8.500V0.500" fill="none" stroke="#666"/></svg>
<div class="a" style="left:1199px;top:716px;width:6px;height:2px;background:#555;"></div>
<div class="a" style="left:1209px;top:716.500px;width:100px;height:1px;background:#a6a6a6;"></div>
<div class="a" style="left:1257.500px;top:710.500px;width:5px;height:11px;background:#666;"></div>
<svg style="left:1312px;top:713px" width="8" height="8" viewBox="0 0 8 8"><path d="M3.700 0.200V7.400M0.100 3.800H7.300" stroke="#555" stroke-width="1.700"/></svg>
<svg style="left:1331.4px;top:706px" width="27.2" height="20"><text x="0" y="14.2" textLength="27.2" lengthAdjust="spacingAndGlyphs" font-family="Liberation Sans, sans-serif" font-size="12" font-weight="normal" fill="#444">100%</text></svg>
<div class="a" style="left:0px;top:728px;width:1366px;height:40px;background:#0c0c0c;"></div><div class="a" style="left:0;top:728px;width:48px;height:40px;background:#050505;"></div>
<div class="a" style="left:48px;top:728px;width:344px;height:40px;background:#373737;"></div>
<svg style="left:16px;top:739px" width="17" height="18" viewBox="0 0 17 18"><path d="M0 2.600L6.800 1.600V8.400H0ZM7.800 1.500L16.500 0.200V8.400H7.800ZM0 9.400H6.800V16.200L0 15.200ZM7.800 9.400H16.500V17.600L7.800 16.300Z" fill="#fff"/></svg>
<svg style="left:59.6px;top:739px" width="195.8" height="20"><text x="0" y="14.2" textLength="195.8" lengthAdjust="spacingAndGlyphs" font-family="Liberation Sans, sans-serif" font-size="14.5" font-weight="normal" fill="#9a9a9a">Search the web and Windows</text></svg>
<svg style="left:405px;top:741px" width="22" height="14" viewBox="0 0 22 14"><rect x="4.500" y="0.700" width="13" height="12.600" fill="none" stroke="#fff" stroke-width="1.300"/><path d="M2.600 2.500H0.700V11.500H2.600M19.400 2.500H21.300V11.500H19.400" fill="none" stroke="#fff" stroke-width="1.300"/></svg>
<svg style="left:455px;top:738px" width="21" height="20" viewBox="0 0 21 20"><path d="M0.600 9.200C1.400 3.600 5.600 0.300 10.800 0.300C16.600 0.300 20.400 4.200 20.400 10V12.200H7.200C7.400 15 9.600 16.600 12.600 16.600C14.800 16.600 17 16 19 14.800V18.400C17 19.400 14.600 19.900 12 19.900C6.400 19.900 2.800 16.600 2.800 11.600C2.800 8.600 4.200 6.200 6.800 4.800C3.800 5.400 1.600 7 0.600 9.200ZM7.400 8.400H14.600C14.600 5.600 13 4.200 10.800 4.200C8.800 4.200 7.600 5.800 7.400 8.400Z" fill="#1e7ad6"/></svg>
<svg style="left:503px;top:738px" width="23" height="19" viewBox="0 0 23 19"><path d="M0.500 2.200C0.500 1.400 1 0.800 1.800 0.800H8L9.800 2.800H21.200C22 2.800 22.500 3.400 22.500 4.200V17.500H0.500Z" fill="#e8b84f"/><rect x="0.500" y="4.600" width="22" height="13" fill="#f9dc83"/><path d="M3.500 18.200V11.600H19.500V18.200H15.500V14.600H7.500V18.200Z" fill="#46a3e0"/><rect x="7.500" y="14.600" width="8" height="3.600" fill="#7cc3ee"/></svg>
<svg style="left:552px;top:735px" width="22" height="24" viewBox="0 0 22 24"><path d="M6.600 6.400C6.600 3 8.400 0.900 11 0.900C13.600 0.900 15.400 3 15.400 6.400" fill="none" stroke="#fff" stroke-width="1.300"/><path d="M0.600 6.800L21.400 6.200V23.800L0.600 22Z" fill="#fff"/><path d="M5.400 10.600L10.200 10.200V14.200H5.400ZM11.200 10.100L16.600 9.600V14.200H11.200ZM5.400 15.200H10.200V19.400L5.400 19ZM11.200 15.200H16.600V20L11.200 19.500Z" fill="#0c0c0c"/></svg>
<div class="a" style="left:589px;top:728px;width:48px;height:40px;background:#383838;"></div>
<div class="a" style="left:589px;top:766px;width:48px;height:2px;background:#76b9ed;"></div>
<svg style="left:600px;top:737px" width="26" height="21" viewBox="0 0 26 21"><rect x="7" y="0" width="19" height="21" rx="1.500" fill="#21a366"/><rect x="16.500" y="0" width="9.500" height="5.250" fill="#33c481"/><rect x="7" y="5.250" width="9.500" height="5.250" fill="#107c41"/><rect x="16.500" y="5.250" width="9.500" height="5.250" fill="#21a366"/><rect x="7" y="10.500" width="9.500" height="5.250" fill="#185c37"/><rect x="16.500" y="10.500" width="9.500" height="5.250" fill="#107c41"/><rect x="7" y="15.750" width="19" height="5.250" fill="#185c37"/><rect x="0" y="4.200" width="13" height="13" rx="1.200" fill="#107c41"/><text x="6.500" y="14.400" text-anchor="middle" font-family="Liberation Sans, sans-serif" font-weight="bold" font-size="10" fill="#fff">X</text></svg>
<div class="a" style="left:642px;top:766px;width:40px;height:2px;background:#76b9ed;"></div>
<svg style="left:650px;top:736px" width="24" height="24" viewBox="0 0 24 24"><circle cx="11.800" cy="12" r="11.600" fill="#6fda44"/><text x="11.800" y="15.600" text-anchor="middle" font-family="Liberation Sans, sans-serif" font-weight="bold" font-size="10.500" fill="#fff">Up</text></svg>
<div class="a" style="left:691px;top:766px;width:40px;height:2px;background:#76b9ed;"></div>
<svg style="left:699px;top:736px" width="24" height="24" viewBox="0 0 24 24"><circle cx="12" cy="12" r="11.500" fill="#db4437"/><path d="M12 12L2.040 6.250A11.500 11.500 0 0 0 12 23.500Z" fill="#0f9d58"/><path d="M12 12L12 23.500A11.500 11.500 0 0 0 21.960 6.250Z" fill="#ffcd40"/><path d="M12 12L6.800 21.000L2.040 6.250Z" fill="#0f9d58"/><path d="M2.040 6.250A11.500 11.500 0 0 1 21.960 6.250L12 6.250Z" fill="#db4437"/><path d="M12 6.800H21.700A11.500 11.500 0 0 1 12 23.500L16.500 14.600Z" fill="#ffcd40"/><path d="M7.500 14.600L2.040 6.250A11.500 11.500 0 0 0 12 23.500L16.500 14.600Z" fill="#0f9d58"/><path d="M2.040 6.250A11.500 11.500 0 0 1 21.700 6.800H12L7.500 14.600Z" fill="#db4437"/><circle cx="12" cy="12" r="5.300" fill="#f1f1f1"/><circle cx="12" cy="12" r="4.200" fill="#4285f4"/></svg>
<svg style="left:1177px;top:744px" width="13" height="8" viewBox="0 0 13 8"><path d="M0.600 7L6.300 1L12 7" fill="none" stroke="#fff" stroke-width="1.300"/></svg>
<svg style="left:1199px;top:742px" width="17" height="12" viewBox="0 0 17 12"><rect x="5.300" y="2.600" width="10" height="7" fill="none" stroke="#fff" stroke-width="1.100"/><rect x="15.600" y="4.600" width="1.200" height="3" fill="#fff"/><rect x="6.800" y="4" width="7" height="4.200" fill="#fff"/><path d="M1.400 0.300V2.600M3.800 0.300V2.600M0.400 2.900H4.800V5C4.800 6.200 3.800 7 2.600 7C1.400 7 0.400 6.200 0.400 5ZM2.600 7V9.800H5.200" fill="none" stroke="#fff" stroke-width="1.100"/></svg>
<svg style="left:1226px;top:743px" width="13" height="12" viewBox="0 0 13 12"><path d="M0.600 11.400A11.400 11.400 0 0 1 12 0.600" fill="none" stroke="#fff" stroke-width="1.200"/><path d="M3.800 11.400A8.200 8.200 0 0 1 12 3.600" fill="none" stroke="#fff" stroke-width="1.200"/><path d="M7 11.400A5 5 0 0 1 12 6.600" fill="none" stroke="#fff" stroke-width="1.200"/><rect x="9.400" y="9" width="2.800" height="2.800" fill="#fff"/></svg>
<svg style="left:1247px;top:740px" width="17" height="15" viewBox="0 0 17 15"><path d="M0.600 5H3.400L7.200 1.400V13.400L3.400 9.800H0.600Z" fill="none" stroke="#fff" stroke-width="1.100" stroke-linejoin="round"/><path d="M9.400 5A3.400 3.400 0 0 1 9.400 9.800M11.400 3A6 6 0 0 1 11.400 11.800M13.400 1A8.800 8.800 0 0 1 13.400 13.800" fill="none" stroke="#fff" stroke-width="1.100"/></svg>
<svg style="left:1271px;top:740px" width="17" height="16" viewBox="0 0 17 16"><path d="M0.700 0.700H15.700V12.100H10.400L8.200 14.600L6 12.100H0.700Z" fill="none" stroke="#fff" stroke-width="1.200"/><path d="M3.400 3.800H13M3.400 6.400H13M3.400 9H9.600" stroke="#fff" stroke-width="1.100"/></svg>
<svg style="left:1305.4px;top:729px" width="41.8" height="20"><text x="0" y="14.2" textLength="41.8" lengthAdjust="spacingAndGlyphs" font-family="Liberation Sans, sans-serif" font-size="12" font-weight="normal" fill="#fff">7:16 PM</text></svg>
<svg style="left:1299.6px;top:746px" width="52.8" height="20"><text x="0" y="14.2" textLength="52.8" lengthAdjust="spacingAndGlyphs" font-family="Liberation Sans, sans-serif" font-size="12" font-weight="normal" fill="#fff">2/14/2020</text></svg>
<div class="a" style="left:1361px;top:728px;width:1px;height:40px;background:#555;"></div>
</body></html>
